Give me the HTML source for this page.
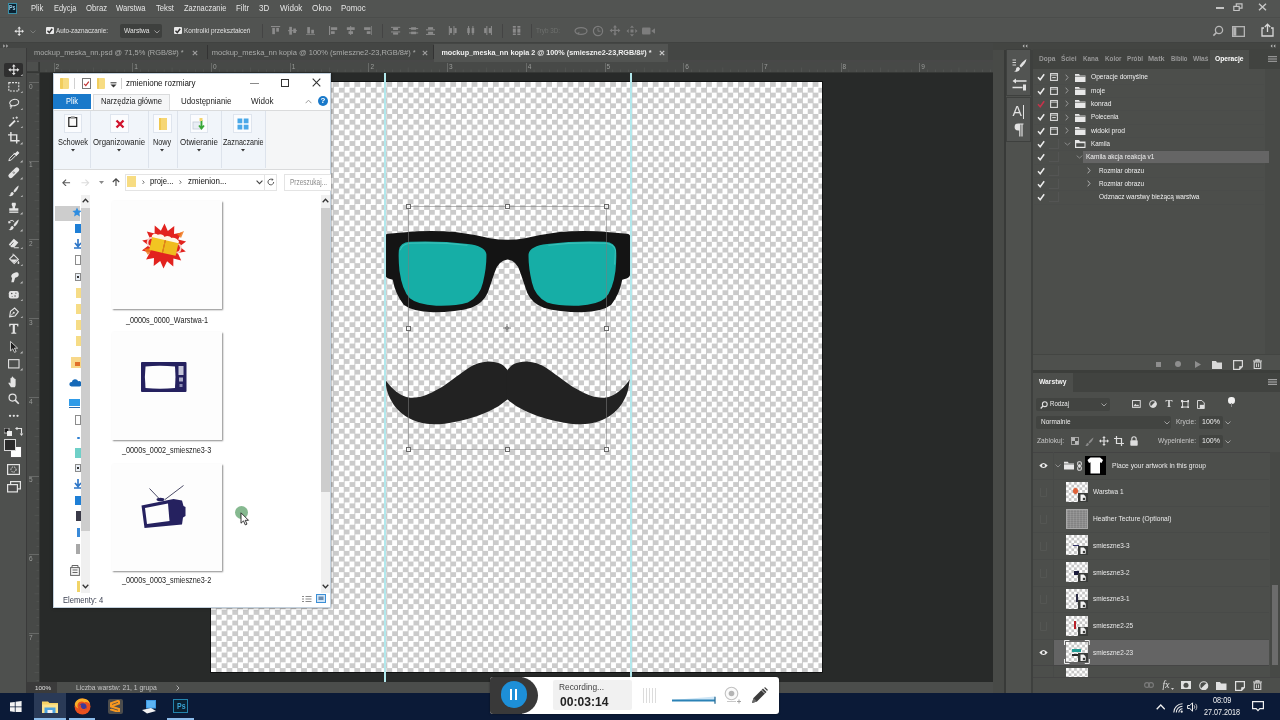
<!DOCTYPE html>
<html lang="pl"><head><meta charset="utf-8"><title>Photoshop</title>
<style>
html,body{margin:0;padding:0;}
body{width:1280px;height:720px;overflow:hidden;position:relative;background:#4d4d4d;font-family:"Liberation Sans",sans-serif;}
#r{position:absolute;left:0;top:0;width:1280px;height:720px;overflow:hidden;will-change:transform;}
#r div,#r span,#r svg{position:absolute;display:block;}
#r span{white-space:nowrap;}
</style></head><body><div id="r">
<div style="left:0px;top:0px;width:1280px;height:19px;background:#525452;"></div>
<div style="left:0px;top:19px;width:1280px;height:24px;background:#515351;"></div>
<div style="left:0px;top:43px;width:1280px;height:18.5px;background:#444644;"></div>
<div style="left:39px;top:72px;width:954px;height:610px;background:#282a29;"></div>
<div style="left:27px;top:60px;width:966px;height:12px;background:#484848;"></div>
<div style="left:27px;top:72px;width:12px;height:610px;background:#484848;"></div>
<div style="left:0px;top:48px;width:27px;height:645px;background:#4e504e;"></div>
<div style="left:27px;top:682px;width:966px;height:11px;background:#4a4a4a;"></div>
<div style="left:211px;top:82px;width:610.6px;height:590px;background:#fff;box-shadow:0 0 0 0.800px #0c0c0c;background-image:conic-gradient(#cbcbcb 25%,#fff 0 50%,#cbcbcb 0 75%,#fff 0);background-size:10.6666px 10.6666px;background-position:0 0;"></div>
<svg style="left:375px;top:195px;" width="270" height="140.06" viewBox="0 0 1280 664"><path d="M47 200 Q48 186 62 184 L200 172 Q300 168 380 176 Q470 188 545 205 Q628 220 711 205 Q786 188 876 176 Q956 168 1056 172 L1194 184 Q1210 186 1211 200 L1211 372 Q1209 390 1192 396 L1172 402 Q1160 470 1120 520 Q1080 552 980 556 Q870 556 800 535 Q745 515 722 465 Q700 400 688 365 Q672 312 628 306 Q584 312 568 365 Q556 400 534 465 Q511 515 456 535 Q386 556 276 556 Q176 552 136 520 Q96 470 84 402 L64 396 Q49 390 47 372 Z" fill="#141414"/><path d="M113 262 Q118 226 165 222 Q300 216 440 232 Q520 240 528 280 Q530 340 512 415 Q498 480 440 510 Q380 528 290 525 Q200 520 165 490 Q128 450 116 360 Q110 300 113 262 Z" fill="#16aea6"/><path d="M1143 262 Q1138 226 1091 222 Q956 216 816 232 Q736 240 728 280 Q726 340 744 415 Q758 480 816 510 Q876 528 966 525 Q1056 520 1091 490 Q1128 450 1140 360 Q1146 300 1143 262 Z" fill="#16aea6"/><path d="M120 262 Q126 232 168 229 Q300 222 438 238" fill="none" stroke="#4cc7c0" stroke-width="5" opacity="0.700"/><path d="M822 238 Q960 222 1092 229 Q1134 232 1140 262 L1136 330" fill="none" stroke="#4cc7c0" stroke-width="5" opacity="0.700"/></svg>
<svg style="left:375px;top:330px;" width="270" height="140.06" viewBox="0 0 1280 664"><path d="M628 190C624.2 186.0 614.7 172.2 605.0 166.0C595.3 159.8 582.5 155.7 570.0 153.0C557.5 150.3 543.3 149.2 530.0 150.0C516.7 150.8 505.0 152.7 490.0 158.0C475.0 163.3 457.5 171.3 440.0 182.0C422.5 192.7 403.3 208.7 385.0 222.0C366.7 235.3 349.2 249.7 330.0 262.0C310.8 274.3 289.2 287.0 270.0 296.0C250.8 305.0 233.3 312.0 215.0 316.0C196.7 320.0 176.7 322.3 160.0 320.0C143.3 317.7 128.7 310.0 115.0 302.0C101.3 294.0 89.2 283.2 78.0 272.0C66.8 260.8 53.0 241.2 48.0 235.0C49.7 244.2 52.7 272.5 58.0 290.0C63.3 307.5 71.0 324.7 80.0 340.0C89.0 355.3 99.5 369.5 112.0 382.0C124.5 394.5 139.5 406.0 155.0 415.0C170.5 424.0 187.5 430.8 205.0 436.0C222.5 441.2 239.2 444.7 260.0 446.0C280.8 447.3 306.7 446.3 330.0 444.0C353.3 441.7 376.7 437.3 400.0 432.0C423.3 426.7 446.7 419.8 470.0 412.0C493.3 404.2 520.0 394.0 540.0 385.0C560.0 376.0 575.3 367.2 590.0 358.0C604.7 348.8 621.7 334.7 628.0 330.0Z" fill="#222222"/><g transform="translate(1256 0) scale(-1 1)"><path d="M628 190C624.2 186.0 614.7 172.2 605.0 166.0C595.3 159.8 582.5 155.7 570.0 153.0C557.5 150.3 543.3 149.2 530.0 150.0C516.7 150.8 505.0 152.7 490.0 158.0C475.0 163.3 457.5 171.3 440.0 182.0C422.5 192.7 403.3 208.7 385.0 222.0C366.7 235.3 349.2 249.7 330.0 262.0C310.8 274.3 289.2 287.0 270.0 296.0C250.8 305.0 233.3 312.0 215.0 316.0C196.7 320.0 176.7 322.3 160.0 320.0C143.3 317.7 128.7 310.0 115.0 302.0C101.3 294.0 89.2 283.2 78.0 272.0C66.8 260.8 53.0 241.2 48.0 235.0C49.7 244.2 52.7 272.5 58.0 290.0C63.3 307.5 71.0 324.7 80.0 340.0C89.0 355.3 99.5 369.5 112.0 382.0C124.5 394.5 139.5 406.0 155.0 415.0C170.5 424.0 187.5 430.8 205.0 436.0C222.5 441.2 239.2 444.7 260.0 446.0C280.8 447.3 306.7 446.3 330.0 444.0C353.3 441.7 376.7 437.3 400.0 432.0C423.3 426.7 446.7 419.8 470.0 412.0C493.3 404.2 520.0 394.0 540.0 385.0C560.0 376.0 575.3 367.2 590.0 358.0C604.7 348.8 621.7 334.7 628.0 330.0Z" fill="#222222"/></g><rect x="622" y="192" width="12" height="136" fill="#222222"/></svg>
<div style="left:408px;top:206px;width:198.5px;height:0.8px;background:rgba(125,125,125,0.550);"></div>
<div style="left:408px;top:449.3px;width:198.5px;height:0.8px;background:rgba(125,125,125,0.550);"></div>
<div style="left:408px;top:206px;width:0.8px;height:244px;background:rgba(125,125,125,0.550);"></div>
<div style="left:606px;top:206px;width:0.8px;height:244px;background:rgba(125,125,125,0.550);"></div>
<div style="left:406.0px;top:204.0px;width:4.6px;height:4.6px;background:rgba(255,255,255,0.700);border:0.900px solid #6a6a6a;box-sizing:border-box;"></div>
<div style="left:406.0px;top:326.0px;width:4.6px;height:4.6px;background:rgba(255,255,255,0.700);border:0.900px solid #6a6a6a;box-sizing:border-box;"></div>
<div style="left:406.0px;top:447.3px;width:4.6px;height:4.6px;background:rgba(255,255,255,0.700);border:0.900px solid #6a6a6a;box-sizing:border-box;"></div>
<div style="left:505.0px;top:204.0px;width:4.6px;height:4.6px;background:rgba(255,255,255,0.700);border:0.900px solid #6a6a6a;box-sizing:border-box;"></div>
<svg style="left:503.3px;top:324.3px;" width="8" height="8" viewBox="0 0 8 8"><path d="M4 0v8M0 4h8" stroke="#777" stroke-width="0.900"/><circle cx="4" cy="4" r="1.500" fill="none" stroke="#777" stroke-width="0.700"/></svg>
<div style="left:505.0px;top:447.3px;width:4.6px;height:4.6px;background:rgba(255,255,255,0.700);border:0.900px solid #6a6a6a;box-sizing:border-box;"></div>
<div style="left:604.0px;top:204.0px;width:4.6px;height:4.6px;background:rgba(255,255,255,0.700);border:0.900px solid #6a6a6a;box-sizing:border-box;"></div>
<div style="left:604.0px;top:326.0px;width:4.6px;height:4.6px;background:rgba(255,255,255,0.700);border:0.900px solid #6a6a6a;box-sizing:border-box;"></div>
<div style="left:604.0px;top:447.3px;width:4.6px;height:4.6px;background:rgba(255,255,255,0.700);border:0.900px solid #6a6a6a;box-sizing:border-box;"></div>
<div style="left:384.3px;top:72px;width:1.5px;height:610px;background:#b2e8ec;"></div>
<div style="left:630px;top:72px;width:1.5px;height:610px;background:#b2e8ec;"></div>
<div style="left:7.6px;top:3px;width:9px;height:11px;background:#0a2232;border:1px solid #3a8fa8;box-sizing:border-box;"></div>
<span style="left:9px;top:4.31px;font-size:6.6px;line-height:8.58px;color:#9fd0e6;font-weight:bold;transform:scaleX(0.793);transform-origin:0 50%;">Ps</span>
<span style="left:30.8px;top:3.48px;font-size:8.8px;line-height:11.44px;color:#e6e6e6;transform:scaleX(0.86);transform-origin:0 50%;">Plik</span>
<span style="left:53.6px;top:3.48px;font-size:8.8px;line-height:11.44px;color:#e6e6e6;transform:scaleX(0.848);transform-origin:0 50%;">Edycja</span>
<span style="left:85.5px;top:3.48px;font-size:8.8px;line-height:11.44px;color:#e6e6e6;transform:scaleX(0.88);transform-origin:0 50%;">Obraz</span>
<span style="left:116.4px;top:3.48px;font-size:8.8px;line-height:11.44px;color:#e6e6e6;transform:scaleX(0.873);transform-origin:0 50%;">Warstwa</span>
<span style="left:155.5px;top:3.48px;font-size:8.8px;line-height:11.44px;color:#e6e6e6;transform:scaleX(0.872);transform-origin:0 50%;">Tekst</span>
<span style="left:183.5px;top:3.48px;font-size:8.8px;line-height:11.44px;color:#e6e6e6;transform:scaleX(0.848);transform-origin:0 50%;">Zaznaczanie</span>
<span style="left:236px;top:3.48px;font-size:8.8px;line-height:11.44px;color:#e6e6e6;transform:scaleX(0.887);transform-origin:0 50%;">Filtr</span>
<span style="left:259.4px;top:3.48px;font-size:8.8px;line-height:11.44px;color:#e6e6e6;transform:scaleX(0.907);transform-origin:0 50%;">3D</span>
<span style="left:279.6px;top:3.48px;font-size:8.8px;line-height:11.44px;color:#e6e6e6;transform:scaleX(0.916);transform-origin:0 50%;">Widok</span>
<span style="left:312px;top:3.48px;font-size:8.8px;line-height:11.44px;color:#e6e6e6;transform:scaleX(0.932);transform-origin:0 50%;">Okno</span>
<span style="left:340.6px;top:3.48px;font-size:8.8px;line-height:11.44px;color:#e6e6e6;transform:scaleX(0.898);transform-origin:0 50%;">Pomoc</span>
<div style="left:1215.5px;top:7.2px;width:8.2px;height:1.5px;background:#c4c4c4;"></div>
<svg style="left:1232.5px;top:2.5px;" width="10" height="8.5" viewBox="0 0 10 8.5"><path d="M0.800 3.300h5.400v4.400h-5.400z M3.300 3.300v-2.500h5.700v4.400h-2.800" fill="none" stroke="#c4c4c4" stroke-width="1.2"/></svg>
<svg style="left:1257.5px;top:2.5px;" width="9" height="8" viewBox="0 0 9 8"><path d="M1 0.800l7 6.400M8 0.800l-7 6.400" stroke="#c8c8c8" stroke-width="1.400"/></svg>
<div style="left:0px;top:16.8px;width:1280px;height:1.2px;background:#4b4d4b;"></div>
<svg style="left:14.2px;top:26.2px;" width="10.4" height="10.4" viewBox="0 0 13 13"><path d="M6.5 0.5l2.2 2.6h-1.5v2.7h2.7v-1.5l2.6 2.2-2.6 2.2v-1.5h-2.7v2.7h1.5l-2.2 2.6-2.2-2.6h1.5v-2.7h-2.7v1.5l-2.6-2.2 2.6-2.2v1.5h2.7v-2.7h-1.5z" fill="#e6e6e6"/></svg>
<svg style="left:30px;top:30px;" width="6" height="4" viewBox="0 0 6 4"><path d="M0.5 0.5l2.5 2.5 2.5-2.5" fill="none" stroke="#7a7c7a" stroke-width="1"/></svg>
<div style="left:46px;top:26.5px;width:7.5px;height:7.5px;background:#e9e9e9;border-radius:1px;"></div>
<svg style="left:46px;top:26.5px;" width="7.5" height="7.5" viewBox="0 0 7.5 7.5"><path d="M1.5 3.8l1.8 1.9 2.9-4" fill="none" stroke="#333" stroke-width="1.5"/></svg>
<span style="left:56px;top:25.86px;font-size:7.6px;line-height:9.88px;color:#e0e0e0;transform:scaleX(0.832);transform-origin:0 50%;">Auto-zaznaczanie:</span>
<div style="left:119.5px;top:24px;width:42px;height:13.5px;background:#3e403e;border-radius:2px;"></div>
<span style="left:124px;top:26.06px;font-size:7.6px;line-height:9.88px;color:#e4e4e4;transform:scaleX(0.871);transform-origin:0 50%;">Warstwa</span>
<svg style="left:153.5px;top:29.5px;" width="6" height="4" viewBox="0 0 6 4"><path d="M0.5 0.5l2.5 2.5 2.5-2.5" fill="none" stroke="#9a9a9a" stroke-width="1"/></svg>
<div style="left:174px;top:26.5px;width:7.5px;height:7.5px;background:#e9e9e9;border-radius:1px;"></div>
<svg style="left:174px;top:26.5px;" width="7.5" height="7.5" viewBox="0 0 7.5 7.5"><path d="M1.5 3.8l1.8 1.9 2.9-4" fill="none" stroke="#333" stroke-width="1.5"/></svg>
<span style="left:184px;top:25.86px;font-size:7.6px;line-height:9.88px;color:#e0e0e0;transform:scaleX(0.851);transform-origin:0 50%;">Kontrolki przekształceń</span>
<div style="left:261.5px;top:24px;width:1px;height:14px;background:#444;"></div>
<svg style="left:271.4px;top:26.2px;" width="9.2" height="9.2" viewBox="0 0 11 11"><rect x="0" y="0" width="11" height="1.3" fill="#8b8b8b"/><rect x="1.5" y="2.3" width="3.2" height="7.5" fill="#8b8b8b"/><rect x="6.3" y="2.3" width="3.2" height="4.5" fill="#8b8b8b"/></svg>
<svg style="left:288.2px;top:26.2px;" width="9.2" height="9.2" viewBox="0 0 11 11"><rect x="0" y="5" width="11" height="1.2" fill="#8b8b8b"/><rect x="1.5" y="1" width="3.2" height="9.4" fill="#8b8b8b"/><rect x="6.3" y="3" width="3.2" height="5.4" fill="#8b8b8b"/></svg>
<svg style="left:305.9px;top:26.2px;" width="9.2" height="9.2" viewBox="0 0 11 11"><rect x="0" y="10" width="11" height="1.3" fill="#8b8b8b"/><rect x="1.5" y="1.3" width="3.2" height="7.7" fill="#8b8b8b"/><rect x="6.3" y="4.5" width="3.2" height="4.5" fill="#8b8b8b"/></svg>
<svg style="left:328.79999999999995px;top:26.2px;" width="9.2" height="9.2" viewBox="0 0 11 11"><rect x="0" y="0" width="1.3" height="11" fill="#8b8b8b"/><rect x="2.3" y="1.5" width="7.5" height="3.2" fill="#8b8b8b"/><rect x="2.3" y="6.3" width="4.5" height="3.2" fill="#8b8b8b"/></svg>
<svg style="left:346.0px;top:26.2px;" width="9.2" height="9.2" viewBox="0 0 11 11"><rect x="5" y="0" width="1.2" height="11" fill="#8b8b8b"/><rect x="1" y="1.5" width="9.4" height="3.2" fill="#8b8b8b"/><rect x="3" y="6.3" width="5.4" height="3.2" fill="#8b8b8b"/></svg>
<svg style="left:363.2px;top:26.2px;" width="9.2" height="9.2" viewBox="0 0 11 11"><rect x="10" y="0" width="1.3" height="11" fill="#8b8b8b"/><rect x="1.3" y="1.5" width="7.7" height="3.2" fill="#8b8b8b"/><rect x="4.5" y="6.3" width="4.5" height="3.2" fill="#8b8b8b"/></svg>
<svg style="left:391.4px;top:26.2px;" width="9.2" height="9.2" viewBox="0 0 11 11"><rect x="0" y="1" width="11" height="1.2" fill="#8b8b8b"/><rect x="0" y="6.5" width="11" height="1.2" fill="#8b8b8b"/><rect x="2.5" y="2.2" width="6" height="2.6" fill="#8b8b8b"/><rect x="2.5" y="7.7" width="6" height="2.6" fill="#8b8b8b"/></svg>
<svg style="left:409.4px;top:26.2px;" width="9.2" height="9.2" viewBox="0 0 11 11"><rect x="0" y="2.5" width="11" height="1.2" fill="#8b8b8b"/><rect x="0" y="7.7" width="11" height="1.2" fill="#8b8b8b"/><rect x="2.5" y="1.5" width="6" height="3" fill="#8b8b8b"/><rect x="2.5" y="6.8" width="6" height="3" fill="#8b8b8b"/></svg>
<svg style="left:425.9px;top:26.2px;" width="9.2" height="9.2" viewBox="0 0 11 11"><rect x="0" y="4" width="11" height="1.2" fill="#8b8b8b"/><rect x="0" y="9.5" width="11" height="1.2" fill="#8b8b8b"/><rect x="2.5" y="1.4" width="6" height="2.6" fill="#8b8b8b"/><rect x="2.5" y="6.9" width="6" height="2.6" fill="#8b8b8b"/></svg>
<svg style="left:448.4px;top:26.2px;" width="9.2" height="9.2" viewBox="0 0 11 11"><rect x="1" y="0" width="1.2" height="11" fill="#8b8b8b"/><rect x="6.5" y="0" width="1.2" height="11" fill="#8b8b8b"/><rect x="2.2" y="2.5" width="2.6" height="6" fill="#8b8b8b"/><rect x="7.7" y="2.5" width="2.6" height="6" fill="#8b8b8b"/></svg>
<svg style="left:466.4px;top:26.2px;" width="9.2" height="9.2" viewBox="0 0 11 11"><rect x="2.5" y="0" width="1.2" height="11" fill="#8b8b8b"/><rect x="7.7" y="0" width="1.2" height="11" fill="#8b8b8b"/><rect x="1.5" y="2.5" width="3" height="6" fill="#8b8b8b"/><rect x="6.8" y="2.5" width="3" height="6" fill="#8b8b8b"/></svg>
<svg style="left:483.4px;top:26.2px;" width="9.2" height="9.2" viewBox="0 0 11 11"><rect x="4" y="0" width="1.2" height="11" fill="#8b8b8b"/><rect x="9.5" y="0" width="1.2" height="11" fill="#8b8b8b"/><rect x="1.4" y="2.5" width="2.6" height="6" fill="#8b8b8b"/><rect x="6.9" y="2.5" width="2.6" height="6" fill="#8b8b8b"/></svg>
<svg style="left:512.4px;top:26.2px;" width="9.2" height="9.2" viewBox="0 0 11 11"><rect x="1" y="0" width="3.6" height="11" fill="#8b8b8b"/><rect x="6.4" y="0" width="3.6" height="11" fill="#8b8b8b"/><rect x="0" y="2" width="11" height="1" fill="#4f4f4f"/><rect x="0" y="8" width="11" height="1" fill="#4f4f4f"/></svg>
<div style="left:382px;top:24px;width:1px;height:14px;background:#444;"></div>
<div style="left:502px;top:24px;width:1px;height:14px;background:#444;"></div>
<div style="left:531px;top:24px;width:1px;height:14px;background:#444;"></div>
<span style="left:536px;top:26.89px;font-size:6.32px;line-height:8.22px;color:#6e706e;">Tryb 3D:</span>
<svg style="left:574px;top:25px;" width="14" height="12" viewBox="0 0 14 12"><ellipse cx="7" cy="6" rx="6" ry="3.4" fill="none" stroke="#7d7d7d" stroke-width="1.2"/><path d="M3 8l2.5-1-0.5 2.6z" fill="#7d7d7d"/></svg>
<svg style="left:592px;top:25px;" width="12" height="12" viewBox="0 0 12 12"><circle cx="6" cy="6" r="4.6" fill="none" stroke="#7d7d7d" stroke-width="1.2"/><path d="M6 3v3.2h2.5" fill="none" stroke="#7d7d7d" stroke-width="1"/></svg>
<svg style="left:609px;top:25px;" width="12" height="12" viewBox="0 0 12 12"><path d="M6 0l2 2.4h-1.3v2.3h2.3v-1.3l2.4 2-2.4 2v-1.3h-2.3v2.3h1.3l-2 2.4-2-2.4h1.3v-2.3h-2.3v1.3l-2.4-2 2.4-2v1.3h2.3v-2.3h-1.3z" fill="#7d7d7d"/></svg>
<svg style="left:626px;top:25px;" width="12" height="12" viewBox="0 0 12 12"><path d="M6 0.5l2 2.2h-4zM6 11.500l2-2.2h-4zM0.500 6l2.200-2v4zM11.500 6l-2.200-2v4z" fill="#7d7d7d"/><rect x="4.500" y="4.500" width="3" height="3" fill="#7d7d7d"/></svg>
<svg style="left:642px;top:26px;" width="14" height="10" viewBox="0 0 14 10"><rect x="0" y="1.5" width="8.500" height="7" rx="1" fill="#7d7d7d"/><path d="M9.200 5l3.800-2.800v5.600z" fill="#7d7d7d"/></svg>
<svg style="left:1212px;top:25px;" width="12" height="12" viewBox="0 0 12 12"><circle cx="7" cy="5" r="3.600" fill="none" stroke="#b8b8b8" stroke-width="1.300"/><path d="M4.400 7.600l-3 3" stroke="#b8b8b8" stroke-width="1.500"/></svg>
<svg style="left:1232px;top:25.5px;" width="13" height="11" viewBox="0 0 13 11"><rect x="0.650" y="0.650" width="11.700" height="9.700" fill="none" stroke="#b4b4b4" stroke-width="1.300"/><rect x="1.300" y="1.300" width="3" height="8.400" fill="#b4b4b4"/></svg>
<svg style="left:1261px;top:23px;" width="13" height="14" viewBox="0 0 13 14"><path d="M3 5h-2v8h11v-8h-2" fill="none" stroke="#d8d8d8" stroke-width="1.300"/><path d="M6.500 9v-7.500M3.800 4l2.700-2.800 2.700 2.800" fill="none" stroke="#d8d8d8" stroke-width="1.300"/></svg>
<div style="left:0px;top:42.3px;width:1280px;height:1px;background:#404240;"></div>
<div style="left:434px;top:44px;width:234px;height:17.5px;background:#525452;"></div>
<div style="left:207px;top:45px;width:1px;height:14px;background:#333;"></div>
<div style="left:433px;top:45px;width:1px;height:14px;background:#333;"></div>
<span style="left:34px;top:48.16px;font-size:7.45px;line-height:9.69px;color:#a9aba9;">mockup_meska_nn.psd @ 71,5% (RGB/8#) *</span>
<span style="left:211.7px;top:48.11px;font-size:7.52px;line-height:9.78px;color:#a9aba9;">mockup_meska_nn kopia @ 100% (smieszne2-23,RGB/8#) *</span>
<span style="left:441.4px;top:48.3px;font-size:7.22px;line-height:9.39px;color:#f0f0f0;font-weight:bold;">mockup_meska_nn kopia 2 @ 100% (smieszne2-23,RGB/8#) *</span>
<svg style="left:191.5px;top:50px;" width="6" height="6" viewBox="0 0 6 6"><path d="M0.800 0.800l4.400 4.400M5.200 0.800l-4.400 4.400" stroke="#9c9c9c" stroke-width="1.200"/></svg>
<svg style="left:421.5px;top:50px;" width="6" height="6" viewBox="0 0 6 6"><path d="M0.800 0.800l4.400 4.400M5.200 0.800l-4.400 4.400" stroke="#9c9c9c" stroke-width="1.200"/></svg>
<svg style="left:658.5px;top:50px;" width="6" height="6" viewBox="0 0 6 6"><path d="M0.800 0.800l4.400 4.400M5.200 0.800l-4.400 4.400" stroke="#c8c8c8" stroke-width="1.200"/></svg>
<svg style="left:3px;top:43.8px;" width="6" height="4" viewBox="0 0 6 4"><path d="M0.300 0.300l1.700 1.700-1.700 1.700zM3.300 0.300l1.700 1.700-1.700 1.700z" fill="#bdbdbd"/></svg>
<div style="left:993px;top:43px;width:287px;height:650px;background:#484a47;"></div>
<div style="left:1004px;top:49px;width:1.6px;height:644px;background:#383a38;"></div>
<div style="left:1031px;top:49px;width:2px;height:644px;background:#3e403e;"></div>
<div style="left:993px;top:43px;width:287px;height:6.5px;background:#434542;"></div>
<svg style="left:1021.5px;top:43.8px;" width="6" height="4" viewBox="0 0 6 4"><path d="M2.300 0.300l-1.700 1.700 1.700 1.700zM5.300 0.300l-1.700 1.700 1.700 1.700z" fill="#bdbdbd"/></svg>
<svg style="left:1269.5px;top:43.8px;" width="6" height="4" viewBox="0 0 6 4"><path d="M2.300 0.300l-1.700 1.700 1.700 1.700zM5.300 0.300l-1.700 1.700 1.700 1.700z" fill="#bdbdbd"/></svg>
<div style="left:1005.6px;top:49px;width:25.4px;height:644px;background:#4f514e;"></div>
<div style="left:1005.6px;top:49px;width:25.4px;height:46.5px;background:#525452;border:1px solid #3e403e;box-sizing:border-box;"></div>
<div style="left:1005.6px;top:96.5px;width:25.4px;height:45px;background:#525452;border:1px solid #3e403e;box-sizing:border-box;"></div>
<svg style="left:1011.5px;top:58px;" width="15" height="15" viewBox="0 0 15 15"><path d="M0.500 2h3.500M0.500 4.500h3.500M0.500 7h3.500" stroke="#e2e2e2" stroke-width="0.900"/><path d="M14.500 1c-3 1.500-5.500 4.500-7 7l1.500 1.500c2.500-2 5-5 5.500-8.500z" fill="#e2e2e2"/><path d="M6.500 9c-2 0-2.500 1.500-2.500 2.500s-1 1.500-2 1.800c2 1 5.500 0.200 6-2.800z" fill="#e2e2e2"/></svg>
<svg style="left:1011.5px;top:77.5px;" width="15" height="14" viewBox="0 0 15 14"><path d="M3 3h11.500M0.500 9.500h10" stroke="#e2e2e2" stroke-width="1.300"/><path d="M0.500 3l3.500-2.500v5zM11 6.500h3v6h-3z" fill="#e2e2e2"/></svg>
<span style="left:1012.5px;top:102.4px;font-size:14px;line-height:18.2px;color:#e2e2e2;">A</span>
<div style="left:1023.2px;top:105px;width:1.1px;height:13.5px;background:#e2e2e2;"></div>
<svg style="left:1014px;top:122.5px;" width="10" height="14" viewBox="0 0 10 14"><path d="M9.500 0.600h-5.500a3.400 3.400 0 0 0 0 6.800h1.200v6h1.200v-11.800h1v11.800h1.200v-11.800h0.900z" fill="#e2e2e2"/></svg>
<div style="left:1033px;top:49px;width:247px;height:322px;background:#4c4e4b;"></div>
<div style="left:1033px;top:49px;width:247px;height:19.5px;background:#414340;"></div>
<div style="left:1209.5px;top:49.5px;width:39px;height:19px;background:#4c4e4b;"></div>
<span style="left:1038.6px;top:53.86px;font-size:7.6px;line-height:9.88px;color:#989898;font-weight:bold;transform:scaleX(0.863);transform-origin:0 50%;">Dopa</span>
<span style="left:1061px;top:53.86px;font-size:7.6px;line-height:9.88px;color:#989898;font-weight:bold;transform:scaleX(0.873);transform-origin:0 50%;">Ściei</span>
<span style="left:1083px;top:53.86px;font-size:7.6px;line-height:9.88px;color:#989898;font-weight:bold;transform:scaleX(0.834);transform-origin:0 50%;">Kana</span>
<span style="left:1104.5px;top:53.86px;font-size:7.6px;line-height:9.88px;color:#989898;font-weight:bold;transform:scaleX(0.832);transform-origin:0 50%;">Kolor</span>
<span style="left:1126.5px;top:53.86px;font-size:7.6px;line-height:9.88px;color:#989898;font-weight:bold;transform:scaleX(0.824);transform-origin:0 50%;">Próbl</span>
<span style="left:1148.3px;top:53.86px;font-size:7.6px;line-height:9.88px;color:#989898;font-weight:bold;transform:scaleX(0.964);transform-origin:0 50%;">Matk</span>
<span style="left:1171px;top:53.86px;font-size:7.6px;line-height:9.88px;color:#989898;font-weight:bold;transform:scaleX(0.782);transform-origin:0 50%;">Biblio</span>
<span style="left:1193px;top:53.86px;font-size:7.6px;line-height:9.88px;color:#989898;font-weight:bold;transform:scaleX(0.874);transform-origin:0 50%;">Właś</span>
<span style="left:1214.5px;top:53.86px;font-size:7.6px;line-height:9.88px;color:#ffffff;font-weight:bold;transform:scaleX(0.876);transform-origin:0 50%;">Operacje</span>
<svg style="left:1267.5px;top:56px;" width="9" height="6" viewBox="0 0 9 6"><path d="M0 0.700h9M0 3h9M0 5.300h9" stroke="#a8a8a8" stroke-width="1"/></svg>
<div style="left:1265px;top:69px;width:15px;height:286px;background:#484a47;"></div>
<div style="left:1034px;top:83.8px;width:230px;height:0.6px;background:#4a4c4a;"></div>
<svg style="left:1036.5px;top:73.3px;" width="8" height="8" viewBox="0 0 8 8"><path d="M1 4.300l2.200 2.400 4-5.500" fill="none" stroke="#ececec" stroke-width="1.500"/></svg>
<svg style="left:1050px;top:73.3px;" width="8" height="8" viewBox="0 0 8 8"><rect x="0.600" y="0.600" width="6.800" height="6.800" fill="none" stroke="#dcdcdc" stroke-width="1.100"/><path d="M0.600 2.200h6.800" stroke="#dcdcdc" stroke-width="0.800"/><path d="M2.200 4.600h3.600" stroke="#dcdcdc" stroke-width="1"/></svg>
<svg style="left:1065px;top:73.8px;" width="4" height="7" viewBox="0 0 4 7"><path d="M0.700 0.700l2.300 2.800-2.300 2.800" fill="none" stroke="#9a9a9a" stroke-width="1"/></svg>
<svg style="left:1075px;top:72.8px;" width="10.5" height="9" viewBox="0 0 10.5 9"><path d="M0 1h4l1 1.500h5.500v6.500h-10.500z" fill="#e8e8e8"/><path d="M0 3.300h10.500" stroke="#4c4e4b" stroke-width="0.700"/></svg>
<span style="left:1090.5px;top:72.36px;font-size:7.6px;line-height:9.88px;color:#f0f0f0;transform:scaleX(0.871);transform-origin:0 50%;">Operacje domyślne</span>
<div style="left:1034px;top:97.1px;width:230px;height:0.6px;background:#4a4c4a;"></div>
<svg style="left:1036.5px;top:86.62px;" width="8" height="8" viewBox="0 0 8 8"><path d="M1 4.300l2.200 2.400 4-5.500" fill="none" stroke="#ececec" stroke-width="1.500"/></svg>
<svg style="left:1050px;top:86.62px;" width="8" height="8" viewBox="0 0 8 8"><rect x="0.600" y="0.600" width="6.800" height="6.800" fill="none" stroke="#dcdcdc" stroke-width="1.100"/><path d="M0.600 2.200h6.800" stroke="#dcdcdc" stroke-width="0.800"/></svg>
<svg style="left:1065px;top:87.12px;" width="4" height="7" viewBox="0 0 4 7"><path d="M0.700 0.700l2.300 2.800-2.300 2.800" fill="none" stroke="#9a9a9a" stroke-width="1"/></svg>
<svg style="left:1075px;top:86.12px;" width="10.5" height="9" viewBox="0 0 10.5 9"><path d="M0 1h4l1 1.500h5.500v6.500h-10.500z" fill="#e8e8e8"/><path d="M0 3.300h10.500" stroke="#4c4e4b" stroke-width="0.700"/></svg>
<span style="left:1090.5px;top:85.68px;font-size:7.6px;line-height:9.88px;color:#f0f0f0;transform:scaleX(0.85);transform-origin:0 50%;">moje</span>
<div style="left:1034px;top:110.4px;width:230px;height:0.6px;background:#4a4c4a;"></div>
<svg style="left:1036.5px;top:99.94px;" width="8" height="8" viewBox="0 0 8 8"><path d="M1 4.300l2.200 2.400 4-5.500" fill="none" stroke="#c8324a" stroke-width="1.500"/></svg>
<svg style="left:1050px;top:99.94px;" width="8" height="8" viewBox="0 0 8 8"><rect x="0.600" y="0.600" width="6.800" height="6.800" fill="none" stroke="#dcdcdc" stroke-width="1.100"/><path d="M0.600 2.200h6.800" stroke="#dcdcdc" stroke-width="0.800"/></svg>
<svg style="left:1065px;top:100.44px;" width="4" height="7" viewBox="0 0 4 7"><path d="M0.700 0.700l2.300 2.800-2.300 2.800" fill="none" stroke="#9a9a9a" stroke-width="1"/></svg>
<svg style="left:1075px;top:99.44px;" width="10.5" height="9" viewBox="0 0 10.5 9"><path d="M0 1h4l1 1.500h5.500v6.500h-10.500z" fill="#e8e8e8"/><path d="M0 3.300h10.500" stroke="#4c4e4b" stroke-width="0.700"/></svg>
<span style="left:1090.5px;top:99.0px;font-size:7.6px;line-height:9.88px;color:#f0f0f0;transform:scaleX(0.882);transform-origin:0 50%;">konrad</span>
<div style="left:1034px;top:123.8px;width:230px;height:0.6px;background:#4a4c4a;"></div>
<svg style="left:1036.5px;top:113.25999999999999px;" width="8" height="8" viewBox="0 0 8 8"><path d="M1 4.300l2.200 2.400 4-5.500" fill="none" stroke="#ececec" stroke-width="1.500"/></svg>
<svg style="left:1050px;top:113.25999999999999px;" width="8" height="8" viewBox="0 0 8 8"><rect x="0.600" y="0.600" width="6.800" height="6.800" fill="none" stroke="#dcdcdc" stroke-width="1.100"/><path d="M0.600 2.200h6.800" stroke="#dcdcdc" stroke-width="0.800"/><path d="M2.200 4.600h3.600" stroke="#dcdcdc" stroke-width="1"/></svg>
<svg style="left:1065px;top:113.75999999999999px;" width="4" height="7" viewBox="0 0 4 7"><path d="M0.700 0.700l2.300 2.800-2.300 2.800" fill="none" stroke="#9a9a9a" stroke-width="1"/></svg>
<svg style="left:1075px;top:112.75999999999999px;" width="10.5" height="9" viewBox="0 0 10.5 9"><path d="M0 1h4l1 1.500h5.500v6.500h-10.500z" fill="#e8e8e8"/><path d="M0 3.300h10.500" stroke="#4c4e4b" stroke-width="0.700"/></svg>
<span style="left:1090.5px;top:112.32px;font-size:7.6px;line-height:9.88px;color:#f0f0f0;transform:scaleX(0.824);transform-origin:0 50%;">Polecenia</span>
<div style="left:1034px;top:137.1px;width:230px;height:0.6px;background:#4a4c4a;"></div>
<svg style="left:1036.5px;top:126.57999999999998px;" width="8" height="8" viewBox="0 0 8 8"><path d="M1 4.300l2.200 2.400 4-5.500" fill="none" stroke="#ececec" stroke-width="1.500"/></svg>
<svg style="left:1050px;top:126.57999999999998px;" width="8" height="8" viewBox="0 0 8 8"><rect x="0.600" y="0.600" width="6.800" height="6.800" fill="none" stroke="#dcdcdc" stroke-width="1.100"/><path d="M0.600 2.200h6.800" stroke="#dcdcdc" stroke-width="0.800"/></svg>
<svg style="left:1065px;top:127.07999999999998px;" width="4" height="7" viewBox="0 0 4 7"><path d="M0.700 0.700l2.300 2.800-2.300 2.800" fill="none" stroke="#9a9a9a" stroke-width="1"/></svg>
<svg style="left:1075px;top:126.07999999999998px;" width="10.5" height="9" viewBox="0 0 10.5 9"><path d="M0 1h4l1 1.500h5.500v6.500h-10.500z" fill="#e8e8e8"/><path d="M0 3.300h10.500" stroke="#4c4e4b" stroke-width="0.700"/></svg>
<span style="left:1090.5px;top:125.64px;font-size:7.6px;line-height:9.88px;color:#f0f0f0;transform:scaleX(0.884);transform-origin:0 50%;">widoki prod</span>
<div style="left:1034px;top:150.4px;width:230px;height:0.6px;background:#4a4c4a;"></div>
<svg style="left:1036.5px;top:139.89999999999998px;" width="8" height="8" viewBox="0 0 8 8"><path d="M1 4.300l2.200 2.400 4-5.500" fill="none" stroke="#ececec" stroke-width="1.500"/></svg>
<div style="left:1049px;top:138.89999999999998px;width:10px;height:10px;background:transparent;border-right:1px solid #5a5a5a;border-bottom:1px solid #5a5a5a;box-sizing:border-box;opacity:0.600;"></div>
<svg style="left:1063.5px;top:141.89999999999998px;" width="7" height="4" viewBox="0 0 7 4"><path d="M0.700 0.700l2.800 2.300 2.800-2.300" fill="none" stroke="#8a8a8a" stroke-width="1"/></svg>
<svg style="left:1075px;top:139.39999999999998px;" width="10.5" height="9" viewBox="0 0 10.5 9"><path d="M0 1h4l1 1.500h5.500v6.500h-10.500z" fill="#e8e8e8"/><path d="M1.200 4.200h8.300v3.600h-8.300z" fill="#4c4e4b"/></svg>
<span style="left:1090.5px;top:138.96px;font-size:7.6px;line-height:9.88px;color:#f0f0f0;transform:scaleX(0.818);transform-origin:0 50%;">Kamila</span>
<div style="left:1083px;top:151.02px;width:186px;height:12.4px;background:#656565;"></div>
<div style="left:1034px;top:163.7px;width:230px;height:0.6px;background:#4a4c4a;"></div>
<svg style="left:1036.5px;top:153.22px;" width="8" height="8" viewBox="0 0 8 8"><path d="M1 4.300l2.200 2.400 4-5.500" fill="none" stroke="#ececec" stroke-width="1.500"/></svg>
<div style="left:1049px;top:152.22px;width:10px;height:10px;background:transparent;border-right:1px solid #5a5a5a;border-bottom:1px solid #5a5a5a;box-sizing:border-box;opacity:0.600;"></div>
<svg style="left:1075.5px;top:155.22px;" width="7" height="4" viewBox="0 0 7 4"><path d="M0.700 0.700l2.800 2.300 2.800-2.300" fill="none" stroke="#8a8a8a" stroke-width="1"/></svg>
<span style="left:1085.5px;top:152.28px;font-size:7.6px;line-height:9.88px;color:#f0f0f0;transform:scaleX(0.858);transform-origin:0 50%;">Kamila akcja reakcja v1</span>
<div style="left:1034px;top:177.0px;width:230px;height:0.6px;background:#4a4c4a;"></div>
<svg style="left:1036.5px;top:166.54000000000002px;" width="8" height="8" viewBox="0 0 8 8"><path d="M1 4.300l2.200 2.400 4-5.500" fill="none" stroke="#ececec" stroke-width="1.500"/></svg>
<div style="left:1049px;top:165.54000000000002px;width:10px;height:10px;background:transparent;border-right:1px solid #5a5a5a;border-bottom:1px solid #5a5a5a;box-sizing:border-box;opacity:0.600;"></div>
<svg style="left:1086.5px;top:167.04000000000002px;" width="4" height="7" viewBox="0 0 4 7"><path d="M0.700 0.700l2.300 2.800-2.300 2.800" fill="none" stroke="#b0b0b0" stroke-width="1"/></svg>
<span style="left:1098.5px;top:165.6px;font-size:7.6px;line-height:9.88px;color:#f0f0f0;transform:scaleX(0.839);transform-origin:0 50%;">Rozmiar obrazu</span>
<div style="left:1034px;top:190.4px;width:230px;height:0.6px;background:#4a4c4a;"></div>
<svg style="left:1036.5px;top:179.86px;" width="8" height="8" viewBox="0 0 8 8"><path d="M1 4.300l2.200 2.400 4-5.500" fill="none" stroke="#ececec" stroke-width="1.500"/></svg>
<div style="left:1049px;top:178.86px;width:10px;height:10px;background:transparent;border-right:1px solid #5a5a5a;border-bottom:1px solid #5a5a5a;box-sizing:border-box;opacity:0.600;"></div>
<svg style="left:1086.5px;top:180.36px;" width="4" height="7" viewBox="0 0 4 7"><path d="M0.700 0.700l2.300 2.800-2.300 2.800" fill="none" stroke="#b0b0b0" stroke-width="1"/></svg>
<span style="left:1098.5px;top:178.92px;font-size:7.6px;line-height:9.88px;color:#f0f0f0;transform:scaleX(0.839);transform-origin:0 50%;">Rozmiar obrazu</span>
<div style="left:1034px;top:203.7px;width:230px;height:0.6px;background:#4a4c4a;"></div>
<svg style="left:1036.5px;top:193.18px;" width="8" height="8" viewBox="0 0 8 8"><path d="M1 4.300l2.200 2.400 4-5.500" fill="none" stroke="#ececec" stroke-width="1.500"/></svg>
<div style="left:1049px;top:192.18px;width:10px;height:10px;background:transparent;border-right:1px solid #5a5a5a;border-bottom:1px solid #5a5a5a;box-sizing:border-box;opacity:0.600;"></div>
<span style="left:1098.5px;top:192.24px;font-size:7.6px;line-height:9.88px;color:#f0f0f0;transform:scaleX(0.853);transform-origin:0 50%;">Odznacz warstwy bieżącą warstwa</span>
<div style="left:1033px;top:354px;width:247px;height:16.5px;background:#4e504d;border-top:1px solid #434542;box-sizing:border-box;"></div>
<div style="left:1033px;top:370px;width:247px;height:2.5px;background:#3c3e3b;"></div>
<div style="left:1155.5px;top:361.5px;width:5px;height:5px;background:#8e8e8e;"></div>
<div style="left:1175px;top:361px;width:6px;height:6px;background:#8e8e8e;border-radius:50%;"></div>
<svg style="left:1194.5px;top:360.5px;" width="6" height="7" viewBox="0 0 6 7"><path d="M0 0l6 3.500-6 3.500z" fill="#8e8e8e"/></svg>
<svg style="left:1211.5px;top:359.5px;" width="10.5" height="9" viewBox="0 0 10.5 9"><path d="M0 1h4l1 1.500h5.500v6.500h-10.500z" fill="#d8d8d8"/></svg>
<svg style="left:1232.5px;top:359.5px;" width="10" height="10" viewBox="0 0 10 10"><path d="M0.600 0.600h8.800v6l-2.800 2.800h-6z" fill="none" stroke="#d8d8d8" stroke-width="1.200"/><path d="M9.400 6.600h-2.800v2.800" fill="#d8d8d8" stroke="#d8d8d8" stroke-width="0.800"/></svg>
<svg style="left:1252.5px;top:359px;" width="9" height="10" viewBox="0 0 9 10"><path d="M0 2h9M3 2v-1.300h3v1.300" fill="none" stroke="#d8d8d8" stroke-width="1.100"/><path d="M1.200 3h6.600v6.600h-6.600z" fill="none" stroke="#d8d8d8" stroke-width="1.100"/><path d="M3.500 4.500v3.600M5.500 4.500v3.600" stroke="#d8d8d8" stroke-width="0.900"/></svg>
<div style="left:1033px;top:372.5px;width:247px;height:320.5px;background:#4c4e4b;"></div>
<div style="left:1033px;top:372.5px;width:247px;height:19px;background:#414340;"></div>
<div style="left:1033px;top:372.5px;width:39.5px;height:19px;background:#4c4e4b;"></div>
<span style="left:1038.5px;top:376.86px;font-size:7.6px;line-height:9.88px;color:#f4f4f4;font-weight:bold;transform:scaleX(0.888);transform-origin:0 50%;">Warstwy</span>
<svg style="left:1267.5px;top:379px;" width="9" height="6" viewBox="0 0 9 6"><path d="M0 0.700h9M0 3h9M0 5.300h9" stroke="#b8b8b8" stroke-width="1"/></svg>
<div style="left:1036px;top:397.5px;width:73.5px;height:13.5px;background:#424441;border-radius:2px;"></div>
<svg style="left:1040px;top:400.5px;" width="8" height="8" viewBox="0 0 8 8"><circle cx="4.800" cy="3.200" r="2.400" fill="none" stroke="#e0e0e0" stroke-width="1.100"/><path d="M3 5l-2.300 2.500" stroke="#e0e0e0" stroke-width="1.200"/></svg>
<span style="left:1050px;top:399.36px;font-size:7.6px;line-height:9.88px;color:#ededed;transform:scaleX(0.803);transform-origin:0 50%;">Rodzaj</span>
<svg style="left:1101px;top:402.5px;" width="6" height="4" viewBox="0 0 6 4"><path d="M0.500 0.500l2.500 2.500 2.500-2.500" fill="none" stroke="#a0a0a0" stroke-width="1"/></svg>
<svg style="left:1132.2px;top:400.2px;" width="8.8" height="7.9" viewBox="0 0 10 9"><rect x="0.600" y="0.600" width="8.800" height="7.800" fill="none" stroke="#dedede" stroke-width="1.100"/><path d="M1.500 7l2.200-2.800 1.800 1.800 1.300-1 1.700 2z" fill="#dedede"/></svg>
<svg style="left:1149px;top:400px;" width="8" height="8" viewBox="0 0 9 9"><circle cx="4.500" cy="4.500" r="3.800" fill="none" stroke="#dedede" stroke-width="1.100"/><path d="M4.500 0.700a3.800 3.800 0 0 1 0 7.600z" fill="#dedede" transform="rotate(45 4.500 4.500)"/></svg>
<span style="left:1165.5px;top:397.38px;font-size:10.5px;line-height:13.65px;color:#dedede;font-weight:bold;font-family:'Liberation Serif',serif;">T</span>
<svg style="left:1180.8px;top:399.8px;" width="8.6" height="8.6" viewBox="0 0 10 10"><rect x="1.800" y="1.800" width="6.400" height="6.400" fill="none" stroke="#dedede" stroke-width="1.100"/><rect x="0" y="0" width="2.600" height="2.600" fill="#dedede"/><rect x="7.400" y="0" width="2.600" height="2.600" fill="#dedede"/><rect x="0" y="7.400" width="2.600" height="2.600" fill="#dedede"/><rect x="7.400" y="7.400" width="2.600" height="2.600" fill="#dedede"/></svg>
<svg style="left:1197.3px;top:399.5px;" width="7.8" height="9.1" viewBox="0 0 9 10.500"><path d="M0.600 0.600h5l2.800 2.800v6.500h-7.800z" fill="none" stroke="#dedede" stroke-width="1.100"/><rect x="3.200" y="5.600" width="5" height="4.400" fill="#dedede"/></svg>
<div style="left:1228px;top:397px;width:6.5px;height:6.5px;background:#f2f2f2;border-radius:50%;"></div>
<div style="left:1230.8px;top:403px;width:1px;height:4px;background:#8a8a8a;"></div>
<div style="left:1036px;top:415.5px;width:135px;height:13.5px;background:#424441;border-radius:2px;"></div>
<span style="left:1040.5px;top:417.36px;font-size:7.6px;line-height:9.88px;color:#ededed;transform:scaleX(0.852);transform-origin:0 50%;">Normalnie</span>
<svg style="left:1163.5px;top:420.5px;" width="6" height="4" viewBox="0 0 6 4"><path d="M0.500 0.500l2.500 2.500 2.500-2.500" fill="none" stroke="#a0a0a0" stroke-width="1"/></svg>
<span style="left:1176px;top:417.06px;font-size:7.6px;line-height:9.88px;color:#c8c8c8;transform:scaleX(0.861);transform-origin:0 50%;">Krycie:</span>
<div style="left:1199px;top:415.5px;width:23.5px;height:13.5px;background:#424441;border-radius:2px;"></div>
<span style="left:1202px;top:417.36px;font-size:7.6px;line-height:9.88px;color:#ededed;transform:scaleX(0.926);transform-origin:0 50%;">100%</span>
<svg style="left:1225px;top:420.5px;" width="6" height="4" viewBox="0 0 6 4"><path d="M0.500 0.500l2.500 2.500 2.500-2.500" fill="none" stroke="#a0a0a0" stroke-width="1"/></svg>
<span style="left:1037px;top:436.36px;font-size:7.6px;line-height:9.88px;color:#c8c8c8;transform:scaleX(0.876);transform-origin:0 50%;">Zablokuj:</span>
<svg style="left:1070.5px;top:437px;" width="8" height="8" viewBox="0 0 8 8"><rect x="0.500" y="0.500" width="7" height="7" fill="none" stroke="#b8b8b8" stroke-width="0.800"/><rect x="0.500" y="0.500" width="3.500" height="3.500" fill="#b8b8b8"/><rect x="4" y="4" width="3.500" height="3.500" fill="#b8b8b8"/></svg>
<svg style="left:1084.5px;top:436.5px;" width="9" height="9" viewBox="0 0 9 9"><path d="M8.500 0.500c-2 1-4 3-5 5l1 1c2-1.500 3.500-3.500 4-6zM3 6c-1.500 0-1.500 1-1.700 1.800s-0.700 1-1.300 1c1.500 0.800 3.800 0 3.900-1.900z" fill="#8c8c8c"/></svg>
<svg style="left:1098.5px;top:436px;" width="10" height="10" viewBox="0 0 10 10"><path d="M5 0l1.700 2h-1.100v2.400h2.400v-1.100l2 1.700-2 1.700v-1.100h-2.400v2.400h1.100l-1.700 2-1.700-2h1.100v-2.400h-2.400v1.100l-2-1.700 2-1.700v1.100h2.400v-2.400h-1.100z" fill="#dedede"/></svg>
<svg style="left:1113.5px;top:436px;" width="10" height="10" viewBox="0 0 10 10"><path d="M2.500 0v7.500h7.500M0 2.500h7.500v7.500" fill="none" stroke="#dedede" stroke-width="1.200"/></svg>
<svg style="left:1130px;top:435.5px;" width="8" height="10" viewBox="0 0 8 10"><rect x="0.300" y="4.300" width="7.400" height="5.400" rx="0.800" fill="#dedede"/><path d="M1.800 4.500v-1.500a2.200 2.200 0 0 1 4.400 0v1.500" fill="none" stroke="#dedede" stroke-width="1.100"/></svg>
<span style="left:1158px;top:436.36px;font-size:7.6px;line-height:9.88px;color:#c8c8c8;transform:scaleX(0.875);transform-origin:0 50%;">Wypełnienie:</span>
<div style="left:1199px;top:434.5px;width:23.5px;height:13.5px;background:#424441;border-radius:2px;"></div>
<span style="left:1202px;top:436.36px;font-size:7.6px;line-height:9.88px;color:#ededed;transform:scaleX(0.926);transform-origin:0 50%;">100%</span>
<svg style="left:1225px;top:439.5px;" width="6" height="4" viewBox="0 0 6 4"><path d="M0.500 0.500l2.500 2.500 2.500-2.500" fill="none" stroke="#a0a0a0" stroke-width="1"/></svg>
<div style="left:1033px;top:451.5px;width:247px;height:0.8px;background:#444;"></div>
<div style="left:1053px;top:452px;width:0.8px;height:225px;background:#484a48;"></div>
<svg style="left:1038.5px;top:462.2px;" width="9" height="7" viewBox="0 0 9 7"><path d="M0.300 3.500q4.200-5 8.400 0q-4.200 5-8.400 0z" fill="#ececec"/><circle cx="4.500" cy="3.500" r="1.500" fill="#4c4e4b"/></svg>
<svg style="left:1055px;top:463.7px;" width="6" height="4" viewBox="0 0 6 4"><path d="M0.500 0.500l2.500 2.500 2.500-2.500" fill="none" stroke="#8c8c8c" stroke-width="1"/></svg>
<svg style="left:1063.5px;top:461.2px;" width="10" height="8.5" viewBox="0 0 10 8.5"><path d="M0 0.800h3.800l1 1.400h5.200v6.300h-10z" fill="#e8e8e8"/><path d="M0 3h10" stroke="#4c4e4b" stroke-width="0.700"/></svg>
<svg style="left:1076.5px;top:460.7px;" width="5" height="10" viewBox="0 0 5 10"><rect x="0.700" y="0.700" width="3.600" height="3.800" rx="1.200" fill="none" stroke="#dcdcdc" stroke-width="1.100"/><rect x="0.700" y="5.500" width="3.600" height="3.800" rx="1.200" fill="none" stroke="#dcdcdc" stroke-width="1.100"/><path d="M2.500 3.200v3.600" stroke="#dcdcdc" stroke-width="1"/></svg>
<div style="left:1085.3px;top:455.8px;width:20.3px;height:18.8px;background:#000;"></div>
<svg style="left:1087.3px;top:457px;" width="16.5" height="17" viewBox="0 0 16.5 17"><path d="M3.500 0.500h9.500l3 2.500-1.500 3-1.500-0.800v11.300h-9.500v-11.300l-1.500 0.800-1.500-3z" fill="#fff"/></svg>
<span style="left:1112.2px;top:460.76px;font-size:7.6px;line-height:9.88px;color:#eaeaea;transform:scaleX(0.883);transform-origin:0 50%;">Place your artwork in this group</span>
<div style="left:1033px;top:478.8px;width:236px;height:0.7px;background:#484a48;"></div>
<svg style="left:1040px;top:488.4px;" width="7" height="9" viewBox="0 0 7 9"><path d="M0.500 0v8.500h6v-8.500" fill="none" stroke="#585a58" stroke-width="0.700"/></svg>
<div style="left:1066px;top:482.0px;width:21.8px;height:20px;background:#fff;background-image:conic-gradient(#c6c6c6 25%,#fff 0 50%,#c6c6c6 0 75%,#fff 0);background-size:5.400px 5.400px;"></div>
<div style="left:1072.5px;top:487.5px;width:5.5px;height:6px;background:#e0623a;border-radius:40%;"></div>
<div style="left:1077.5px;top:493.0px;width:10.3px;height:9px;background:#3a3c3a;"></div>
<svg style="left:1079.8px;top:493.8px;" width="6" height="7.5" viewBox="0 0 6 7.5"><path d="M0.500 0.500h3.200l1.800 1.800v4.700h-5z" fill="#f4f4f4"/><rect x="2.600" y="3.600" width="3" height="3" fill="#3a3c3a" stroke="#f4f4f4" stroke-width="0.600"/></svg>
<span style="left:1093.4px;top:487.46px;font-size:7.6px;line-height:9.88px;color:#eaeaea;transform:scaleX(0.859);transform-origin:0 50%;">Warstwa 1</span>
<div style="left:1033px;top:505.5px;width:236px;height:0.7px;background:#484a48;"></div>
<svg style="left:1040px;top:515.12px;" width="7" height="9" viewBox="0 0 7 9"><path d="M0.500 0v8.500h6v-8.500" fill="none" stroke="#585a58" stroke-width="0.700"/></svg>
<div style="left:1066px;top:508.7px;width:21.8px;height:20px;background:#8e8e8e;background-image:repeating-linear-gradient(90deg,rgba(255,255,255,0.100) 0 1px,transparent 1px 3px),repeating-linear-gradient(0deg,rgba(0,0,0,0.080) 0 1px,transparent 1px 2px);border:1px solid #a8a8a8;box-sizing:border-box;"></div>
<span style="left:1093.4px;top:514.18px;font-size:7.6px;line-height:9.88px;color:#eaeaea;transform:scaleX(0.879);transform-origin:0 50%;">Heather Tecture (Optional)</span>
<div style="left:1033px;top:532.2px;width:236px;height:0.7px;background:#484a48;"></div>
<svg style="left:1040px;top:541.8399999999999px;" width="7" height="9" viewBox="0 0 7 9"><path d="M0.500 0v8.500h6v-8.500" fill="none" stroke="#585a58" stroke-width="0.700"/></svg>
<div style="left:1066px;top:535.4px;width:21.8px;height:20px;background:#fff;background-image:conic-gradient(#c6c6c6 25%,#fff 0 50%,#c6c6c6 0 75%,#fff 0);background-size:5.400px 5.400px;"></div>
<div style="left:1073px;top:544.9px;width:6px;height:1.5px;background:#33336a;"></div>
<div style="left:1077.5px;top:546.4px;width:10.3px;height:9px;background:#3a3c3a;"></div>
<svg style="left:1079.8px;top:547.1999999999999px;" width="6" height="7.5" viewBox="0 0 6 7.5"><path d="M0.500 0.500h3.200l1.800 1.800v4.700h-5z" fill="#f4f4f4"/><rect x="2.600" y="3.600" width="3" height="3" fill="#3a3c3a" stroke="#f4f4f4" stroke-width="0.600"/></svg>
<span style="left:1093.4px;top:540.9px;font-size:7.6px;line-height:9.88px;color:#eaeaea;transform:scaleX(0.849);transform-origin:0 50%;">smieszne3-3</span>
<div style="left:1033px;top:559.0px;width:236px;height:0.7px;background:#484a48;"></div>
<svg style="left:1040px;top:568.56px;" width="7" height="9" viewBox="0 0 7 9"><path d="M0.500 0v8.500h6v-8.500" fill="none" stroke="#585a58" stroke-width="0.700"/></svg>
<div style="left:1066px;top:562.2px;width:21.8px;height:20px;background:#fff;background-image:conic-gradient(#c6c6c6 25%,#fff 0 50%,#c6c6c6 0 75%,#fff 0);background-size:5.400px 5.400px;"></div>
<div style="left:1073.5px;top:570.7px;width:5.5px;height:4.5px;background:#1c1c3c;"></div>
<div style="left:1077.5px;top:573.2px;width:10.3px;height:9px;background:#3a3c3a;"></div>
<svg style="left:1079.8px;top:574.0px;" width="6" height="7.5" viewBox="0 0 6 7.5"><path d="M0.500 0.500h3.200l1.800 1.800v4.700h-5z" fill="#f4f4f4"/><rect x="2.600" y="3.600" width="3" height="3" fill="#3a3c3a" stroke="#f4f4f4" stroke-width="0.600"/></svg>
<span style="left:1093.4px;top:567.62px;font-size:7.6px;line-height:9.88px;color:#eaeaea;transform:scaleX(0.849);transform-origin:0 50%;">smieszne3-2</span>
<div style="left:1033px;top:585.7px;width:236px;height:0.7px;background:#484a48;"></div>
<svg style="left:1040px;top:595.28px;" width="7" height="9" viewBox="0 0 7 9"><path d="M0.500 0v8.500h6v-8.500" fill="none" stroke="#585a58" stroke-width="0.700"/></svg>
<div style="left:1066px;top:588.9px;width:21.8px;height:20px;background:#fff;background-image:conic-gradient(#c6c6c6 25%,#fff 0 50%,#c6c6c6 0 75%,#fff 0);background-size:5.400px 5.400px;"></div>
<div style="left:1075.5px;top:594.4px;width:2px;height:8px;background:#2a2a44;"></div>
<div style="left:1077.5px;top:599.9px;width:10.3px;height:9px;background:#3a3c3a;"></div>
<svg style="left:1079.8px;top:600.6999999999999px;" width="6" height="7.5" viewBox="0 0 6 7.5"><path d="M0.500 0.500h3.200l1.800 1.800v4.700h-5z" fill="#f4f4f4"/><rect x="2.600" y="3.600" width="3" height="3" fill="#3a3c3a" stroke="#f4f4f4" stroke-width="0.600"/></svg>
<span style="left:1093.4px;top:594.34px;font-size:7.6px;line-height:9.88px;color:#eaeaea;transform:scaleX(0.849);transform-origin:0 50%;">smieszne3-1</span>
<div style="left:1033px;top:612.4px;width:236px;height:0.7px;background:#484a48;"></div>
<svg style="left:1040px;top:622.0px;" width="7" height="9" viewBox="0 0 7 9"><path d="M0.500 0v8.500h6v-8.500" fill="none" stroke="#585a58" stroke-width="0.700"/></svg>
<div style="left:1066px;top:615.6px;width:21.8px;height:20px;background:#fff;background-image:conic-gradient(#c6c6c6 25%,#fff 0 50%,#c6c6c6 0 75%,#fff 0);background-size:5.400px 5.400px;"></div>
<div style="left:1073.5px;top:621.1px;width:2.5px;height:8px;background:#b8202a;"></div>
<div style="left:1077.5px;top:626.6px;width:10.3px;height:9px;background:#3a3c3a;"></div>
<svg style="left:1079.8px;top:627.4px;" width="6" height="7.5" viewBox="0 0 6 7.5"><path d="M0.500 0.500h3.200l1.800 1.800v4.700h-5z" fill="#f4f4f4"/><rect x="2.600" y="3.600" width="3" height="3" fill="#3a3c3a" stroke="#f4f4f4" stroke-width="0.600"/></svg>
<span style="left:1093.4px;top:621.06px;font-size:7.6px;line-height:9.88px;color:#eaeaea;transform:scaleX(0.848);transform-origin:0 50%;">smieszne2-25</span>
<div style="left:1053.5px;top:639.72px;width:215.5px;height:26px;background:#646464;"></div>
<div style="left:1033px;top:639.1px;width:236px;height:0.7px;background:#484a48;"></div>
<svg style="left:1064px;top:640.3px;" width="25.8" height="24" viewBox="0 0 25.8 24"><path d="M0.500 5v-4.500h5M20.800 0.500h4.500v4.500M25.300 19v4.500h-4.500M5.500 23.500h-5v-4.500" fill="none" stroke="#f0f0f0" stroke-width="1"/></svg>
<div style="left:1066px;top:642.3px;width:21.8px;height:20px;background:#fff;background-image:conic-gradient(#c6c6c6 25%,#fff 0 50%,#c6c6c6 0 75%,#fff 0);background-size:5.400px 5.400px;"></div>
<div style="left:1072px;top:649.3px;width:9px;height:2.5px;background:#1f9c94;"></div>
<div style="left:1072px;top:653.8px;width:9px;height:2px;background:#2a2a2a;"></div>
<div style="left:1077.5px;top:653.3px;width:10.3px;height:9px;background:#3a3c3a;"></div>
<svg style="left:1079.8px;top:654.0999999999999px;" width="6" height="7.5" viewBox="0 0 6 7.5"><path d="M0.500 0.500h3.200l1.800 1.800v4.700h-5z" fill="#f4f4f4"/><rect x="2.600" y="3.600" width="3" height="3" fill="#3a3c3a" stroke="#f4f4f4" stroke-width="0.600"/></svg>
<span style="left:1093.4px;top:647.78px;font-size:7.6px;line-height:9.88px;color:#eaeaea;transform:scaleX(0.848);transform-origin:0 50%;">smieszne2-23</span>
<svg style="left:1038.5px;top:649.22px;" width="9" height="7" viewBox="0 0 9 7"><path d="M0.300 3.500q4.200-5 8.400 0q-4.200 5-8.400 0z" fill="#ececec"/><circle cx="4.500" cy="3.500" r="1.500" fill="#4c4e4b"/></svg>
<div style="left:1033px;top:665.3px;width:236px;height:0.7px;background:#454545;"></div>
<div style="left:1066px;top:668.3px;width:21.8px;height:9px;background:#fff;background-image:conic-gradient(#c6c6c6 25%,#fff 0 50%,#c6c6c6 0 75%,#fff 0);background-size:5.400px 5.400px;"></div>
<div style="left:1270px;top:452px;width:10px;height:225px;background:#474946;"></div>
<div style="left:1271.5px;top:584.5px;width:6.5px;height:80px;background:#6c6c6c;"></div>
<div style="left:1033px;top:677px;width:247px;height:16px;background:#4c4e4b;border-top:1px solid #454545;box-sizing:border-box;"></div>
<svg style="left:1144px;top:682px;" width="10" height="6" viewBox="0 0 10 6"><rect x="0.600" y="0.600" width="4.800" height="4.800" rx="2.400" fill="none" stroke="#7c7c7c" stroke-width="1.100"/><rect x="4.600" y="0.600" width="4.800" height="4.800" rx="2.400" fill="none" stroke="#7c7c7c" stroke-width="1.100"/></svg>
<span style="left:1162.5px;top:678.62px;font-size:9.5px;line-height:12.35px;color:#e0e0e0;font-style:italic;font-family:'Liberation Serif',serif;">fx</span>
<svg style="left:1170.5px;top:688px;" width="3" height="2" viewBox="0 0 3 2"><path d="M0 0h3l-1.500 2z" fill="#d0d0d0"/></svg>
<svg style="left:1180.5px;top:680.5px;" width="10" height="8.5" viewBox="0 0 10 8.5"><rect x="0" y="0" width="10" height="8.500" fill="#e0e0e0"/><circle cx="5" cy="4.250" r="2.500" fill="#4c4e4b"/></svg>
<svg style="left:1199px;top:680.5px;" width="9.5" height="9.5" viewBox="0 0 9.5 9.5"><circle cx="4.750" cy="4.750" r="4" fill="none" stroke="#e0e0e0" stroke-width="1.100"/><path d="M4.750 0.750a4 4 0 0 1 0 8z" fill="#e0e0e0" transform="rotate(45 4.750 4.750)"/></svg>
<svg style="left:1216px;top:680.5px;" width="10.5" height="9" viewBox="0 0 10.5 9"><path d="M0 1h4l1 1.500h5.500v6.500h-10.500z" fill="#e0e0e0"/></svg>
<svg style="left:1234.5px;top:680.5px;" width="10" height="10" viewBox="0 0 10 10"><path d="M0.600 0.600h8.800v6l-2.800 2.800h-6z" fill="none" stroke="#e0e0e0" stroke-width="1.200"/><path d="M9.400 6.600h-2.800v2.800" fill="#e0e0e0" stroke="#e0e0e0" stroke-width="0.800"/></svg>
<svg style="left:1252.5px;top:680px;" width="9" height="10" viewBox="0 0 9 10"><path d="M0 2h9M3 2v-1.300h3v1.300" fill="none" stroke="#d8d8d8" stroke-width="1.100"/><path d="M1.200 3h6.600v6.600h-6.600z" fill="none" stroke="#d8d8d8" stroke-width="1.100"/><path d="M3.500 4.500v3.600M5.500 4.500v3.600" stroke="#d8d8d8" stroke-width="0.900"/></svg>
<div style="left:25.5px;top:48px;width:1.5px;height:645px;background:#3a3a3a;"></div>
<div style="left:3.5px;top:62.5px;width:19.5px;height:14px;background:#2f2f2f;border-radius:2px;"></div>
<svg style="left:7.6px;top:63.7px;overflow:visible;" width="11.6" height="11.6" viewBox="0 0 14 14"><path d="M7 0.300l2.300 2.800h-1.600v3.200h3.200v-1.600l2.800 2.300-2.800 2.300v-1.600h-3.200v3.200h1.600l-2.300 2.800-2.300-2.800h1.600v-3.200h-3.200v1.600l-2.800-2.300 2.800-2.300v1.600h3.200v-3.200h-1.600z" fill="#e4e4e4"/></svg>
<svg style="left:20px;top:73.7px;" width="2.6" height="2.6" viewBox="0 0 2.6 2.6"><path d="M2.600 0v2.600h-2.600z" fill="#bdbdbd"/></svg>
<svg style="left:7.6px;top:80.5px;overflow:visible;" width="11.6" height="11.6" viewBox="0 0 14 14"><rect x="1" y="2" width="12" height="10" fill="none" stroke="#e4e4e4" stroke-width="1.300" stroke-dasharray="2.400 1.400"/></svg>
<svg style="left:20px;top:90.5px;" width="2.6" height="2.6" viewBox="0 0 2.6 2.6"><path d="M2.600 0v2.600h-2.600z" fill="#bdbdbd"/></svg>
<svg style="left:7.6px;top:97.8px;overflow:visible;" width="11.6" height="11.6" viewBox="0 0 14 14"><ellipse cx="7.500" cy="5.500" rx="5.500" ry="3.800" fill="none" stroke="#e4e4e4" stroke-width="1.300" transform="rotate(-12 7.500 5.500)"/><path d="M3.500 8.200c-1.500 1-1 3 0.500 2.500s0.500-2-0.500-1.500c0.500 1.800 0 3-0.500 4" fill="none" stroke="#e4e4e4" stroke-width="1.100"/></svg>
<svg style="left:20px;top:107.8px;" width="2.6" height="2.6" viewBox="0 0 2.6 2.6"><path d="M2.600 0v2.600h-2.600z" fill="#bdbdbd"/></svg>
<svg style="left:7.6px;top:115.7px;overflow:visible;" width="11.6" height="11.6" viewBox="0 0 14 14"><path d="M1.500 12.500l7-7" stroke="#e4e4e4" stroke-width="2.300"/><path d="M10.500 0.500v3M9 2h3M12 5.500v2M11 6.500h2M6.500 1.500v2M5.500 2.500h2" stroke="#e4e4e4" stroke-width="1"/></svg>
<svg style="left:20px;top:125.7px;" width="2.6" height="2.6" viewBox="0 0 2.6 2.6"><path d="M2.600 0v2.600h-2.600z" fill="#bdbdbd"/></svg>
<svg style="left:7.6px;top:132.2px;overflow:visible;" width="11.6" height="11.6" viewBox="0 0 14 14"><path d="M3.500 0v10.500h10.500M0 3.500h10.500v10.500" fill="none" stroke="#e4e4e4" stroke-width="1.700"/></svg>
<svg style="left:20px;top:142.2px;" width="2.6" height="2.6" viewBox="0 0 2.6 2.6"><path d="M2.600 0v2.600h-2.600z" fill="#bdbdbd"/></svg>
<svg style="left:7.6px;top:150.2px;overflow:visible;" width="11.6" height="11.6" viewBox="0 0 14 14"><path d="M1 13l1-3 5.500-5.500 2 2-5.500 5.500z" fill="none" stroke="#e4e4e4" stroke-width="1.200"/><path d="M7 3.500l3.500 3.500M8.500 5l2.300-2.800a1.500 1.500 0 0 1 2 2l-2.800 2.300z" fill="#e4e4e4" stroke="#e4e4e4" stroke-width="1.200"/></svg>
<svg style="left:20px;top:160.2px;" width="2.6" height="2.6" viewBox="0 0 2.6 2.6"><path d="M2.600 0v2.600h-2.600z" fill="#bdbdbd"/></svg>
<svg style="left:7.6px;top:167.2px;overflow:visible;" width="11.6" height="11.6" viewBox="0 0 14 14"><rect x="-1" y="4.200" width="16" height="5.600" rx="2.600" fill="#e4e4e4" transform="rotate(-45 7 7)"/><circle cx="6" cy="7" r="0.600" fill="#4d4d4d"/><circle cx="8" cy="7" r="0.600" fill="#4d4d4d"/><circle cx="7" cy="6" r="0.600" fill="#4d4d4d"/><circle cx="7" cy="8" r="0.600" fill="#4d4d4d"/></svg>
<svg style="left:20px;top:177.2px;" width="2.6" height="2.6" viewBox="0 0 2.6 2.6"><path d="M2.600 0v2.600h-2.600z" fill="#bdbdbd"/></svg>
<svg style="left:7.6px;top:184.7px;overflow:visible;" width="11.6" height="11.6" viewBox="0 0 14 14"><path d="M13 0.500c-2.500 1.500-5 4.300-6.500 7l1.500 1.500c2.500-2 4.500-5 5-8.500z" fill="#e4e4e4"/><path d="M5.500 8.500c-2 0-2.500 1.500-2.500 2.500s-1 2-2.500 2c2 1.200 6 0.500 6.500-3z" fill="#e4e4e4"/></svg>
<svg style="left:20px;top:194.7px;" width="2.6" height="2.6" viewBox="0 0 2.6 2.6"><path d="M2.600 0v2.600h-2.600z" fill="#bdbdbd"/></svg>
<svg style="left:7.6px;top:202.2px;overflow:visible;" width="11.6" height="11.6" viewBox="0 0 14 14"><path d="M5 0.800h4c1.200 1.500 0.300 3.200-0.500 4.800v1.900h4v3h-11v-3h4v-1.900c-0.800-1.600-1.700-3.300-0.500-4.800z" fill="#e4e4e4"/><rect x="1.500" y="11.500" width="11" height="1.600" fill="#e4e4e4"/></svg>
<svg style="left:20px;top:212.2px;" width="2.6" height="2.6" viewBox="0 0 2.6 2.6"><path d="M2.600 0v2.600h-2.600z" fill="#bdbdbd"/></svg>
<svg style="left:7.6px;top:219.2px;overflow:visible;" width="11.6" height="11.6" viewBox="0 0 14 14"><path d="M13 0.500c-2.500 1.500-5 4.300-6.500 7l1.500 1.500c2.500-2 4.500-5 5-8.500z" fill="#e4e4e4"/><path d="M5.500 8.500c-2 0-2.500 1.500-2.500 2.500s-1 2-2.500 2c2 1.200 6 0.500 6.500-3z" fill="#e4e4e4"/><path d="M1 5a3.500 3.500 0 0 1 6.500-1.500" fill="none" stroke="#e4e4e4" stroke-width="1.200"/><path d="M0 2.500l1 3 2.800-1z" fill="#e4e4e4"/></svg>
<svg style="left:20px;top:229.2px;" width="2.6" height="2.6" viewBox="0 0 2.6 2.6"><path d="M2.600 0v2.600h-2.600z" fill="#bdbdbd"/></svg>
<svg style="left:7.6px;top:236.7px;overflow:visible;" width="11.6" height="11.6" viewBox="0 0 14 14"><path d="M1 9l6-7 5.500 4.500-5 6h-3.500z" fill="#e4e4e4"/><path d="M3 10.500l3.500-4" stroke="#4d4d4d" stroke-width="1"/><path d="M7 13h6" stroke="#e4e4e4" stroke-width="1.200"/></svg>
<svg style="left:20px;top:246.7px;" width="2.6" height="2.6" viewBox="0 0 2.6 2.6"><path d="M2.600 0v2.600h-2.600z" fill="#bdbdbd"/></svg>
<svg style="left:7.6px;top:253.7px;overflow:visible;" width="11.6" height="11.6" viewBox="0 0 14 14"><path d="M2 6l5-5 5.500 5.500-5 5z" fill="none" stroke="#e4e4e4" stroke-width="1.300"/><path d="M3 6.500h8.500l-4 4z" fill="#e4e4e4"/><path d="M12.500 8c1 1.500 1.500 2.500 1 3.500s-2 0.800-2-0.500c0-1 0.500-2 1-3z" fill="#e4e4e4"/><path d="M6 1v-1.500" stroke="#e4e4e4"/></svg>
<svg style="left:20px;top:263.7px;" width="2.6" height="2.6" viewBox="0 0 2.6 2.6"><path d="M2.600 0v2.600h-2.600z" fill="#bdbdbd"/></svg>
<svg style="left:7.6px;top:271.2px;overflow:visible;" width="11.6" height="11.6" viewBox="0 0 14 14"><path d="M4 13.500l1-5c-1.500-1-1.500-3 0-4.500s4-3 6-2.500 2.500 3 1.500 4.500-3 1.500-4 2.500l-1.500 5z" fill="#e4e4e4"/></svg>
<svg style="left:20px;top:281.2px;" width="2.6" height="2.6" viewBox="0 0 2.6 2.6"><path d="M2.600 0v2.600h-2.600z" fill="#bdbdbd"/></svg>
<svg style="left:7.6px;top:288.7px;overflow:visible;" width="11.6" height="11.6" viewBox="0 0 14 14"><rect x="1" y="2.500" width="12" height="9" rx="2.500" fill="#e4e4e4"/><circle cx="4.500" cy="5.500" r="0.900" fill="#4d4d4d"/><circle cx="8.500" cy="8.500" r="0.900" fill="#4d4d4d"/><circle cx="9.500" cy="5" r="0.700" fill="#4d4d4d"/><circle cx="5" cy="9" r="0.600" fill="#4d4d4d"/></svg>
<svg style="left:20px;top:298.7px;" width="2.6" height="2.6" viewBox="0 0 2.6 2.6"><path d="M2.600 0v2.600h-2.600z" fill="#bdbdbd"/></svg>
<svg style="left:7.6px;top:305.7px;overflow:visible;" width="11.6" height="11.6" viewBox="0 0 14 14"><path d="M2 13l1-6.500 5-4 4.500 4.500-4 5z" fill="none" stroke="#e4e4e4" stroke-width="1.300"/><circle cx="7" cy="8" r="1.200" fill="#e4e4e4"/><path d="M2.500 12.500l4-4" stroke="#e4e4e4" stroke-width="1"/></svg>
<svg style="left:20px;top:315.7px;" width="2.6" height="2.6" viewBox="0 0 2.6 2.6"><path d="M2.600 0v2.600h-2.600z" fill="#bdbdbd"/></svg>
<svg style="left:7.6px;top:323.2px;overflow:visible;" width="11.6" height="11.6" viewBox="0 0 14 14"><path d="M1.500 1h11v3.200h-1.200l-0.500-1.700h-2.500v9l1.700 0.400v1.100h-6v-1.100l1.700-0.400v-9h-2.500l-0.500 1.700h-1.200z" fill="#e4e4e4"/></svg>
<svg style="left:7.6px;top:341.2px;overflow:visible;" width="11.6" height="11.6" viewBox="0 0 14 14"><path d="M3 0.500v11.500l2.800-2.600 2 4.300 2-0.900-2-4.200h3.800z" fill="#1e1e1e" stroke="#e4e4e4" stroke-width="1"/></svg>
<svg style="left:20px;top:351.2px;" width="2.6" height="2.6" viewBox="0 0 2.6 2.6"><path d="M2.600 0v2.600h-2.600z" fill="#bdbdbd"/></svg>
<svg style="left:7.6px;top:358.2px;overflow:visible;" width="11.6" height="11.6" viewBox="0 0 14 14"><rect x="0.700" y="2" width="12.600" height="10" fill="none" stroke="#e4e4e4" stroke-width="1.300"/></svg>
<svg style="left:20px;top:368.2px;" width="2.6" height="2.6" viewBox="0 0 2.6 2.6"><path d="M2.600 0v2.600h-2.600z" fill="#bdbdbd"/></svg>
<svg style="left:7.6px;top:375.7px;overflow:visible;" width="11.6" height="11.6" viewBox="0 0 14 14"><path d="M3.500 13.500c-1-2-3-4-3-5s1.500-1 2.500 0.500v-6c0-1 1.500-1 1.500 0v-1.500c0-1 1.600-1 1.600 0v1c0-1 1.600-1 1.600 0v1.500c0-1 1.500-1 1.500 0v6.500c0 1.500-0.500 2.500-1 3z" fill="#e4e4e4"/></svg>
<svg style="left:7.6px;top:393.2px;overflow:visible;" width="11.6" height="11.6" viewBox="0 0 14 14"><circle cx="5.500" cy="5.500" r="4.200" fill="none" stroke="#e4e4e4" stroke-width="1.500"/><path d="M8.700 8.700l4.300 4.300" stroke="#e4e4e4" stroke-width="2"/></svg>
<svg style="left:7.6px;top:410.2px;overflow:visible;" width="11.6" height="11.6" viewBox="0 0 14 14"><circle cx="2.500" cy="7" r="1.400" fill="#e4e4e4"/><circle cx="7" cy="7" r="1.400" fill="#e4e4e4"/><circle cx="11.500" cy="7" r="1.400" fill="#e4e4e4"/></svg>
<svg style="left:3.5px;top:427.5px;" width="8" height="8" viewBox="0 0 8 8"><rect x="0" y="0" width="5" height="5" fill="#1e1e1e" stroke="#ddd" stroke-width="0.800"/><rect x="3" y="3" width="5" height="5" fill="#eee"/></svg>
<svg style="left:15px;top:427px;" width="9" height="9" viewBox="0 0 9 9"><path d="M2 1.500h4.500v5" fill="none" stroke="#e4e4e4" stroke-width="1.100"/><path d="M0 1.500l2.500-1.800v3.600zM6.500 9l-1.800-2.500h3.600z" fill="#e4e4e4"/></svg>
<div style="left:10px;top:446px;width:12px;height:12px;background:#ffffff;border:1px solid #555;box-sizing:border-box;"></div>
<div style="left:3.5px;top:439px;width:12px;height:12px;background:#2a2a2a;border:1px solid #d8d8d8;box-sizing:border-box;"></div>
<svg style="left:7px;top:464px;" width="13" height="11" viewBox="0 0 13 11"><rect x="0.600" y="0.600" width="11.800" height="9.800" fill="none" stroke="#e4e4e4" stroke-width="1.200"/><circle cx="6.500" cy="5.500" r="2.600" fill="none" stroke="#e4e4e4" stroke-width="1" stroke-dasharray="1.500 1"/></svg>
<svg style="left:7px;top:481px;" width="14" height="12" viewBox="0 0 14 12"><rect x="3.600" y="0.600" width="9.800" height="7.300" fill="none" stroke="#e4e4e4" stroke-width="1.200"/><rect x="0.600" y="3.600" width="9.800" height="7.300" fill="#4d4d4d" stroke="#e4e4e4" stroke-width="1.200"/></svg>
<div style="left:27px;top:61.5px;width:966px;height:10.5px;background:#474947;"></div>
<div style="left:27px;top:72px;width:12px;height:610px;background:#474947;"></div>
<div style="left:27px;top:71.6px;width:966px;height:0.8px;background:#353735;"></div>
<div style="left:38.6px;top:61.5px;width:0.8px;height:620.5px;background:#353735;"></div>
<div style="left:27px;top:61.5px;width:12px;height:10.5px;background:#4d4f4d;border-right:1px solid #3a3c3a;border-bottom:1px solid #3a3c3a;box-sizing:border-box;"></div>
<div style="left:53.6px;top:62.5px;width:0.8px;height:9.5px;background:#676967;"></div>
<span style="left:55.6px;top:62.77px;font-size:6.5px;line-height:8.45px;color:#9a9c9a;">2</span>
<div style="left:132.3px;top:62.5px;width:0.8px;height:9.5px;background:#676967;"></div>
<span style="left:134.3px;top:62.77px;font-size:6.5px;line-height:8.45px;color:#9a9c9a;">1</span>
<div style="left:211.0px;top:62.5px;width:0.8px;height:9.5px;background:#676967;"></div>
<span style="left:213.0px;top:62.77px;font-size:6.5px;line-height:8.45px;color:#9a9c9a;">0</span>
<div style="left:289.7px;top:62.5px;width:0.8px;height:9.5px;background:#676967;"></div>
<span style="left:291.7px;top:62.77px;font-size:6.5px;line-height:8.45px;color:#9a9c9a;">1</span>
<div style="left:368.4px;top:62.5px;width:0.8px;height:9.5px;background:#676967;"></div>
<span style="left:370.4px;top:62.77px;font-size:6.5px;line-height:8.45px;color:#9a9c9a;">2</span>
<div style="left:447.1px;top:62.5px;width:0.8px;height:9.5px;background:#676967;"></div>
<span style="left:449.1px;top:62.77px;font-size:6.5px;line-height:8.45px;color:#9a9c9a;">3</span>
<div style="left:525.8px;top:62.5px;width:0.8px;height:9.5px;background:#676967;"></div>
<span style="left:527.8px;top:62.77px;font-size:6.5px;line-height:8.45px;color:#9a9c9a;">4</span>
<div style="left:604.5px;top:62.5px;width:0.8px;height:9.5px;background:#676967;"></div>
<span style="left:606.5px;top:62.77px;font-size:6.5px;line-height:8.45px;color:#9a9c9a;">5</span>
<div style="left:683.2px;top:62.5px;width:0.8px;height:9.5px;background:#676967;"></div>
<span style="left:685.2px;top:62.77px;font-size:6.5px;line-height:8.45px;color:#9a9c9a;">6</span>
<div style="left:761.9px;top:62.5px;width:0.8px;height:9.5px;background:#676967;"></div>
<span style="left:763.9px;top:62.77px;font-size:6.5px;line-height:8.45px;color:#9a9c9a;">7</span>
<div style="left:840.6px;top:62.5px;width:0.8px;height:9.5px;background:#676967;"></div>
<span style="left:842.6px;top:62.77px;font-size:6.5px;line-height:8.45px;color:#9a9c9a;">8</span>
<div style="left:919.3px;top:62.5px;width:0.8px;height:9.5px;background:#676967;"></div>
<span style="left:921.3px;top:62.77px;font-size:6.5px;line-height:8.45px;color:#9a9c9a;">9</span>
<svg style="left:27px;top:60px;" width="966" height="12" viewBox="0 0 966 12"><rect x="18.7" y="9.5" width="0.700" height="2.5" fill="#555755"/><rect x="34.5" y="9.5" width="0.700" height="2.5" fill="#555755"/><rect x="42.3" y="9.5" width="0.700" height="2.5" fill="#555755"/><rect x="50.2" y="9.5" width="0.700" height="2.5" fill="#555755"/><rect x="58.1" y="9.5" width="0.700" height="2.5" fill="#555755"/><rect x="66.0" y="7.5" width="0.700" height="4.5" fill="#555755"/><rect x="73.8" y="9.5" width="0.700" height="2.5" fill="#555755"/><rect x="81.7" y="9.5" width="0.700" height="2.5" fill="#555755"/><rect x="89.6" y="9.5" width="0.700" height="2.5" fill="#555755"/><rect x="97.4" y="9.5" width="0.700" height="2.5" fill="#555755"/><rect x="113.2" y="9.5" width="0.700" height="2.5" fill="#555755"/><rect x="121.0" y="9.5" width="0.700" height="2.5" fill="#555755"/><rect x="128.9" y="9.5" width="0.700" height="2.5" fill="#555755"/><rect x="136.8" y="9.5" width="0.700" height="2.5" fill="#555755"/><rect x="144.7" y="7.5" width="0.700" height="4.5" fill="#555755"/><rect x="152.5" y="9.5" width="0.700" height="2.5" fill="#555755"/><rect x="160.4" y="9.5" width="0.700" height="2.5" fill="#555755"/><rect x="168.3" y="9.5" width="0.700" height="2.5" fill="#555755"/><rect x="176.1" y="9.5" width="0.700" height="2.5" fill="#555755"/><rect x="191.9" y="9.5" width="0.700" height="2.5" fill="#555755"/><rect x="199.7" y="9.5" width="0.700" height="2.5" fill="#555755"/><rect x="207.6" y="9.5" width="0.700" height="2.5" fill="#555755"/><rect x="215.5" y="9.5" width="0.700" height="2.5" fill="#555755"/><rect x="223.3" y="7.5" width="0.700" height="4.5" fill="#555755"/><rect x="231.2" y="9.5" width="0.700" height="2.5" fill="#555755"/><rect x="239.1" y="9.5" width="0.700" height="2.5" fill="#555755"/><rect x="247.0" y="9.5" width="0.700" height="2.5" fill="#555755"/><rect x="254.8" y="9.5" width="0.700" height="2.5" fill="#555755"/><rect x="270.6" y="9.5" width="0.700" height="2.5" fill="#555755"/><rect x="278.4" y="9.5" width="0.700" height="2.5" fill="#555755"/><rect x="286.3" y="9.5" width="0.700" height="2.5" fill="#555755"/><rect x="294.2" y="9.5" width="0.700" height="2.5" fill="#555755"/><rect x="302.1" y="7.5" width="0.700" height="4.5" fill="#555755"/><rect x="309.9" y="9.5" width="0.700" height="2.5" fill="#555755"/><rect x="317.8" y="9.5" width="0.700" height="2.5" fill="#555755"/><rect x="325.7" y="9.5" width="0.700" height="2.5" fill="#555755"/><rect x="333.5" y="9.5" width="0.700" height="2.5" fill="#555755"/><rect x="349.3" y="9.5" width="0.700" height="2.5" fill="#555755"/><rect x="357.1" y="9.5" width="0.700" height="2.5" fill="#555755"/><rect x="365.0" y="9.5" width="0.700" height="2.5" fill="#555755"/><rect x="372.9" y="9.5" width="0.700" height="2.5" fill="#555755"/><rect x="380.8" y="7.5" width="0.700" height="4.5" fill="#555755"/><rect x="388.6" y="9.5" width="0.700" height="2.5" fill="#555755"/><rect x="396.5" y="9.5" width="0.700" height="2.5" fill="#555755"/><rect x="404.4" y="9.5" width="0.700" height="2.5" fill="#555755"/><rect x="412.2" y="9.5" width="0.700" height="2.5" fill="#555755"/><rect x="428.0" y="9.5" width="0.700" height="2.5" fill="#555755"/><rect x="435.8" y="9.5" width="0.700" height="2.5" fill="#555755"/><rect x="443.7" y="9.5" width="0.700" height="2.5" fill="#555755"/><rect x="451.6" y="9.5" width="0.700" height="2.5" fill="#555755"/><rect x="459.4" y="7.5" width="0.700" height="4.5" fill="#555755"/><rect x="467.3" y="9.5" width="0.700" height="2.5" fill="#555755"/><rect x="475.2" y="9.5" width="0.700" height="2.5" fill="#555755"/><rect x="483.1" y="9.5" width="0.700" height="2.5" fill="#555755"/><rect x="490.9" y="9.5" width="0.700" height="2.5" fill="#555755"/><rect x="506.7" y="9.5" width="0.700" height="2.5" fill="#555755"/><rect x="514.5" y="9.5" width="0.700" height="2.5" fill="#555755"/><rect x="522.4" y="9.5" width="0.700" height="2.5" fill="#555755"/><rect x="530.3" y="9.5" width="0.700" height="2.5" fill="#555755"/><rect x="538.1" y="7.5" width="0.700" height="4.5" fill="#555755"/><rect x="546.0" y="9.5" width="0.700" height="2.5" fill="#555755"/><rect x="553.9" y="9.5" width="0.700" height="2.5" fill="#555755"/><rect x="561.8" y="9.5" width="0.700" height="2.5" fill="#555755"/><rect x="569.6" y="9.5" width="0.700" height="2.5" fill="#555755"/><rect x="585.4" y="9.5" width="0.700" height="2.5" fill="#555755"/><rect x="593.2" y="9.5" width="0.700" height="2.5" fill="#555755"/><rect x="601.1" y="9.5" width="0.700" height="2.5" fill="#555755"/><rect x="609.0" y="9.5" width="0.700" height="2.5" fill="#555755"/><rect x="616.9" y="7.5" width="0.700" height="4.5" fill="#555755"/><rect x="624.7" y="9.5" width="0.700" height="2.5" fill="#555755"/><rect x="632.6" y="9.5" width="0.700" height="2.5" fill="#555755"/><rect x="640.5" y="9.5" width="0.700" height="2.5" fill="#555755"/><rect x="648.3" y="9.5" width="0.700" height="2.5" fill="#555755"/><rect x="664.1" y="9.5" width="0.700" height="2.5" fill="#555755"/><rect x="671.9" y="9.5" width="0.700" height="2.5" fill="#555755"/><rect x="679.8" y="9.5" width="0.700" height="2.5" fill="#555755"/><rect x="687.7" y="9.5" width="0.700" height="2.5" fill="#555755"/><rect x="695.5" y="7.5" width="0.700" height="4.5" fill="#555755"/><rect x="703.4" y="9.5" width="0.700" height="2.5" fill="#555755"/><rect x="711.3" y="9.5" width="0.700" height="2.5" fill="#555755"/><rect x="719.2" y="9.5" width="0.700" height="2.5" fill="#555755"/><rect x="727.0" y="9.5" width="0.700" height="2.5" fill="#555755"/><rect x="742.8" y="9.5" width="0.700" height="2.5" fill="#555755"/><rect x="750.6" y="9.5" width="0.700" height="2.5" fill="#555755"/><rect x="758.5" y="9.5" width="0.700" height="2.5" fill="#555755"/><rect x="766.4" y="9.5" width="0.700" height="2.5" fill="#555755"/><rect x="774.2" y="7.5" width="0.700" height="4.5" fill="#555755"/><rect x="782.1" y="9.5" width="0.700" height="2.5" fill="#555755"/><rect x="790.0" y="9.5" width="0.700" height="2.5" fill="#555755"/><rect x="797.9" y="9.5" width="0.700" height="2.5" fill="#555755"/><rect x="805.7" y="9.5" width="0.700" height="2.5" fill="#555755"/><rect x="821.5" y="9.5" width="0.700" height="2.5" fill="#555755"/><rect x="829.3" y="9.5" width="0.700" height="2.5" fill="#555755"/><rect x="837.2" y="9.5" width="0.700" height="2.5" fill="#555755"/><rect x="845.1" y="9.5" width="0.700" height="2.5" fill="#555755"/><rect x="853.0" y="7.5" width="0.700" height="4.5" fill="#555755"/><rect x="860.8" y="9.5" width="0.700" height="2.5" fill="#555755"/><rect x="868.7" y="9.5" width="0.700" height="2.5" fill="#555755"/><rect x="876.6" y="9.5" width="0.700" height="2.5" fill="#555755"/><rect x="884.4" y="9.5" width="0.700" height="2.5" fill="#555755"/><rect x="900.2" y="9.5" width="0.700" height="2.5" fill="#555755"/><rect x="908.0" y="9.5" width="0.700" height="2.5" fill="#555755"/><rect x="915.9" y="9.5" width="0.700" height="2.5" fill="#555755"/><rect x="923.8" y="9.5" width="0.700" height="2.5" fill="#555755"/><rect x="931.6" y="7.5" width="0.700" height="4.5" fill="#555755"/><rect x="939.5" y="9.5" width="0.700" height="2.5" fill="#555755"/><rect x="947.4" y="9.5" width="0.700" height="2.5" fill="#555755"/><rect x="955.3" y="9.5" width="0.700" height="2.5" fill="#555755"/><rect x="963.1" y="9.5" width="0.700" height="2.5" fill="#555755"/></svg>
<div style="left:29px;top:82.0px;width:10px;height:0.8px;background:#676967;"></div>
<span style="left:29px;top:82.78px;font-size:6.5px;line-height:8.45px;color:#9a9c9a;">0</span>
<div style="left:29px;top:160.7px;width:10px;height:0.8px;background:#676967;"></div>
<span style="left:29px;top:161.47px;font-size:6.5px;line-height:8.45px;color:#9a9c9a;">1</span>
<div style="left:29px;top:239.4px;width:10px;height:0.8px;background:#676967;"></div>
<span style="left:29px;top:240.18px;font-size:6.5px;line-height:8.45px;color:#9a9c9a;">2</span>
<div style="left:29px;top:318.1px;width:10px;height:0.8px;background:#676967;"></div>
<span style="left:29px;top:318.88px;font-size:6.5px;line-height:8.45px;color:#9a9c9a;">3</span>
<div style="left:29px;top:396.8px;width:10px;height:0.8px;background:#676967;"></div>
<span style="left:29px;top:397.57px;font-size:6.5px;line-height:8.45px;color:#9a9c9a;">4</span>
<div style="left:29px;top:475.5px;width:10px;height:0.8px;background:#676967;"></div>
<span style="left:29px;top:476.27px;font-size:6.5px;line-height:8.45px;color:#9a9c9a;">5</span>
<div style="left:29px;top:554.2px;width:10px;height:0.8px;background:#676967;"></div>
<span style="left:29px;top:554.98px;font-size:6.5px;line-height:8.45px;color:#9a9c9a;">6</span>
<div style="left:29px;top:632.9px;width:10px;height:0.8px;background:#676967;"></div>
<span style="left:29px;top:633.67px;font-size:6.5px;line-height:8.45px;color:#9a9c9a;">7</span>
<svg style="left:27px;top:72px;" width="12" height="610" viewBox="0 0 12 610"><rect x="9.5" y="2.1" width="2.5" height="0.700" fill="#555755"/><rect x="9.5" y="17.9" width="2.5" height="0.700" fill="#555755"/><rect x="9.5" y="25.7" width="2.5" height="0.700" fill="#555755"/><rect x="9.5" y="33.6" width="2.5" height="0.700" fill="#555755"/><rect x="9.5" y="41.5" width="2.5" height="0.700" fill="#555755"/><rect x="7.5" y="49.3" width="4.5" height="0.700" fill="#555755"/><rect x="9.5" y="57.2" width="2.5" height="0.700" fill="#555755"/><rect x="9.5" y="65.1" width="2.5" height="0.700" fill="#555755"/><rect x="9.5" y="73.0" width="2.5" height="0.700" fill="#555755"/><rect x="9.5" y="80.8" width="2.5" height="0.700" fill="#555755"/><rect x="9.5" y="96.6" width="2.5" height="0.700" fill="#555755"/><rect x="9.5" y="104.4" width="2.5" height="0.700" fill="#555755"/><rect x="9.5" y="112.3" width="2.5" height="0.700" fill="#555755"/><rect x="9.5" y="120.2" width="2.5" height="0.700" fill="#555755"/><rect x="7.5" y="128.1" width="4.5" height="0.700" fill="#555755"/><rect x="9.5" y="135.9" width="2.5" height="0.700" fill="#555755"/><rect x="9.5" y="143.8" width="2.5" height="0.700" fill="#555755"/><rect x="9.5" y="151.7" width="2.5" height="0.700" fill="#555755"/><rect x="9.5" y="159.5" width="2.5" height="0.700" fill="#555755"/><rect x="9.5" y="175.3" width="2.5" height="0.700" fill="#555755"/><rect x="9.5" y="183.1" width="2.5" height="0.700" fill="#555755"/><rect x="9.5" y="191.0" width="2.5" height="0.700" fill="#555755"/><rect x="9.5" y="198.9" width="2.5" height="0.700" fill="#555755"/><rect x="7.5" y="206.8" width="4.5" height="0.700" fill="#555755"/><rect x="9.5" y="214.6" width="2.5" height="0.700" fill="#555755"/><rect x="9.5" y="222.5" width="2.5" height="0.700" fill="#555755"/><rect x="9.5" y="230.4" width="2.5" height="0.700" fill="#555755"/><rect x="9.5" y="238.2" width="2.5" height="0.700" fill="#555755"/><rect x="9.5" y="254.0" width="2.5" height="0.700" fill="#555755"/><rect x="9.5" y="261.8" width="2.5" height="0.700" fill="#555755"/><rect x="9.5" y="269.7" width="2.5" height="0.700" fill="#555755"/><rect x="9.5" y="277.6" width="2.5" height="0.700" fill="#555755"/><rect x="7.5" y="285.4" width="4.5" height="0.700" fill="#555755"/><rect x="9.5" y="293.3" width="2.5" height="0.700" fill="#555755"/><rect x="9.5" y="301.2" width="2.5" height="0.700" fill="#555755"/><rect x="9.5" y="309.1" width="2.5" height="0.700" fill="#555755"/><rect x="9.5" y="316.9" width="2.5" height="0.700" fill="#555755"/><rect x="9.5" y="332.7" width="2.5" height="0.700" fill="#555755"/><rect x="9.5" y="340.5" width="2.5" height="0.700" fill="#555755"/><rect x="9.5" y="348.4" width="2.5" height="0.700" fill="#555755"/><rect x="9.5" y="356.3" width="2.5" height="0.700" fill="#555755"/><rect x="7.5" y="364.1" width="4.5" height="0.700" fill="#555755"/><rect x="9.5" y="372.0" width="2.5" height="0.700" fill="#555755"/><rect x="9.5" y="379.9" width="2.5" height="0.700" fill="#555755"/><rect x="9.5" y="387.8" width="2.5" height="0.700" fill="#555755"/><rect x="9.5" y="395.6" width="2.5" height="0.700" fill="#555755"/><rect x="9.5" y="411.4" width="2.5" height="0.700" fill="#555755"/><rect x="9.5" y="419.2" width="2.5" height="0.700" fill="#555755"/><rect x="9.5" y="427.1" width="2.5" height="0.700" fill="#555755"/><rect x="9.5" y="435.0" width="2.5" height="0.700" fill="#555755"/><rect x="7.5" y="442.9" width="4.5" height="0.700" fill="#555755"/><rect x="9.5" y="450.7" width="2.5" height="0.700" fill="#555755"/><rect x="9.5" y="458.6" width="2.5" height="0.700" fill="#555755"/><rect x="9.5" y="466.5" width="2.5" height="0.700" fill="#555755"/><rect x="9.5" y="474.3" width="2.5" height="0.700" fill="#555755"/><rect x="9.5" y="490.1" width="2.5" height="0.700" fill="#555755"/><rect x="9.5" y="497.9" width="2.5" height="0.700" fill="#555755"/><rect x="9.5" y="505.8" width="2.5" height="0.700" fill="#555755"/><rect x="9.5" y="513.7" width="2.5" height="0.700" fill="#555755"/><rect x="7.5" y="521.5" width="4.5" height="0.700" fill="#555755"/><rect x="9.5" y="529.4" width="2.5" height="0.700" fill="#555755"/><rect x="9.5" y="537.3" width="2.5" height="0.700" fill="#555755"/><rect x="9.5" y="545.2" width="2.5" height="0.700" fill="#555755"/><rect x="9.5" y="553.0" width="2.5" height="0.700" fill="#555755"/><rect x="9.5" y="568.8" width="2.5" height="0.700" fill="#555755"/><rect x="9.5" y="576.6" width="2.5" height="0.700" fill="#555755"/><rect x="9.5" y="584.5" width="2.5" height="0.700" fill="#555755"/><rect x="9.5" y="592.4" width="2.5" height="0.700" fill="#555755"/><rect x="7.5" y="600.2" width="4.5" height="0.700" fill="#555755"/><rect x="9.5" y="608.1" width="2.5" height="0.700" fill="#555755"/></svg>
<div style="left:27px;top:682px;width:966px;height:11.5px;background:#4b4d4b;"></div>
<div style="left:27px;top:682px;width:30px;height:11.5px;background:#3b3b3b;"></div>
<span style="left:35px;top:683.93px;font-size:6.26px;line-height:8.14px;color:#e0e0e0;">100%</span>
<span style="left:76px;top:683.58px;font-size:6.81px;line-height:8.85px;color:#c4c4c4;">Liczba warstw: 21, 1 grupa</span>
<svg style="left:175.5px;top:685px;" width="4" height="6" viewBox="0 0 4 6"><path d="M0.600 0.600l2.400 2.400-2.400 2.400" fill="none" stroke="#b0b0b0" stroke-width="1"/></svg>
<div style="left:0px;top:693.3px;width:1280px;height:26.7px;background:#0b1a37;"></div>
<svg style="left:10.3px;top:700.6px;" width="11.6" height="11.6" viewBox="0 0 11.6 11.6"><path d="M0 1.600l4.800-0.700v4.600h-4.800zM5.600 0.800l6-0.800v5.500h-6zM0 6.300h4.800v4.600l-4.800-0.700zM5.600 6.300h6v5.500l-6-0.800z" fill="#f4f4f4"/></svg>
<div style="left:34.4px;top:693.3px;width:31.2px;height:26.7px;background:#2a3a57;"></div>
<div style="left:34.4px;top:718.3px;width:31.2px;height:1.7px;background:#8cbcea;"></div>
<svg style="left:42px;top:699.5px;" width="16" height="13" viewBox="0 0 16 13"><path d="M0 1.500h6l1.500 1.500h8.500v10h-16z" fill="#f5d266"/><path d="M0 4.500h16v8.500h-16z" fill="#fbe38e"/><rect x="2.500" y="7.500" width="11" height="5.500" fill="#4ea4e0"/><rect x="5.500" y="10" width="5" height="3" fill="#f4f4f4"/></svg>
<div style="left:69.4px;top:718.3px;width:26px;height:1.7px;background:#8cbcea;"></div>
<svg style="left:73.5px;top:698px;" width="17" height="17" viewBox="0 0 17 17"><circle cx="8.500" cy="8.500" r="8" fill="#e8501e"/><path d="M8.500 0.500a8 8 0 0 1 7.800 6.200c-1.500-2.500-4-3.200-5.800-2.200c-2.200-2-5.500-1-6.500 1c-1 2-0.500 4 0.500 5c-2-0.500-3.500-2.500-3.800-4.500a8 8 0 0 1 7.800-5.500z" fill="#f8b028"/><circle cx="8.800" cy="9" r="3.800" fill="#3a3a9a"/><path d="M5 9a3.800 3.800 0 0 0 7.600 0.500c-1 1.500-3 2-4.500 1s-1.800-2.800-0.800-4c-1.300 0.300-2.300 1.200-2.300 2.500z" fill="#e8501e"/></svg>
<div style="left:107.8px;top:698.8px;width:15px;height:15px;background:#4c4c4c;border-radius:2px;"></div>
<svg style="left:110.3px;top:700.3px;" width="10" height="12" viewBox="0 0 10 12"><path d="M9 0.500l-8 2.800v3.200l8 2.500v3l-8-2.500v-0.500M9 0.500v3l-8 2.800" fill="none" stroke="#f89820" stroke-width="2"/></svg>
<svg style="left:140.6px;top:698.5px;" width="16" height="15" viewBox="0 0 16 15"><path d="M5 1h10v8.500h-10z" fill="#3f9ae4"/><path d="M1 11l9-2 5 3-9 2.500z" fill="#f2f2f2"/><path d="M6 2h8v6.500h-8z" fill="#5cb4f4"/></svg>
<div style="left:167px;top:718.3px;width:26.8px;height:1.7px;background:#8cbcea;"></div>
<div style="left:173.4px;top:699px;width:14.6px;height:14px;background:#0a2233;border:1px solid #2484ac;box-sizing:border-box;"></div>
<span style="left:176.6px;top:700.68px;font-size:8.5px;line-height:11.05px;color:#3aa4d4;font-weight:bold;transform:scaleX(0.818);transform-origin:0 50%;">Ps</span>
<svg style="left:1155.6px;top:704px;" width="9.5" height="6" viewBox="0 0 9.5 6"><path d="M0.700 5.300l4.050-4.300 4.050 4.300" fill="none" stroke="#f0f0f0" stroke-width="1.300"/></svg>
<svg style="left:1172.5px;top:702.5px;" width="10" height="10" viewBox="0 0 10 10"><path d="M0.800 9.500a8.700 8.700 0 0 1 8.700-8.700M3.300 9.500a6.200 6.200 0 0 1 6.200-6.200M5.800 9.500a3.700 3.700 0 0 1 3.700-3.700" fill="none" stroke="#e8e8e8" stroke-width="1.100"/><circle cx="8.700" cy="8.700" r="1.100" fill="#e8e8e8"/></svg>
<svg style="left:1187px;top:701.5px;" width="11" height="10" viewBox="0 0 11 10"><path d="M0.600 3.500h2.200l2.700-2.700v8.400l-2.700-2.700h-2.200z" fill="none" stroke="#f0f0f0" stroke-width="1"/><path d="M7 3.200a2.500 2.500 0 0 1 0 3.600M8.500 1.800a4.500 4.500 0 0 1 0 6.400" fill="none" stroke="#c8c8c8" stroke-width="0.900"/></svg>
<span style="left:1213px;top:695.14px;font-size:8.4px;line-height:10.92px;color:#f4f4f4;transform:scaleX(0.871);transform-origin:0 50%;">08:09</span>
<span style="left:1204.4px;top:707.04px;font-size:8.4px;line-height:10.92px;color:#f4f4f4;transform:scaleX(0.861);transform-origin:0 50%;">27.07.2018</span>
<svg style="left:1252px;top:701px;" width="12" height="10.5" viewBox="0 0 12 10.5"><path d="M0.600 0.600h10.800v7h-3.600l-1.800 2-1.800-2h-3.600z" fill="none" stroke="#f0f0f0" stroke-width="1.200"/></svg>
<div style="left:490px;top:676.7px;width:289px;height:37px;background:#ffffff;border-radius:3px;box-shadow:0 0 2px rgba(0,0,0,0.500);"></div>
<div style="left:490px;top:676.7px;width:32px;height:37px;background:#393939;border-radius:3px 0 0 3px;"></div>
<div style="left:500px;top:676.7px;width:38px;height:37px;background:#393939;border-radius:0 19px 19px 0;"></div>
<div style="left:500.5px;top:681px;width:26.5px;height:26.5px;background:#1d8fd8;border-radius:50%;"></div>
<div style="left:510px;top:688.5px;width:2.2px;height:11.5px;background:#fff;"></div>
<div style="left:515.3px;top:688.5px;width:2.2px;height:11.5px;background:#fff;"></div>
<div style="left:553px;top:680px;width:79px;height:29.5px;background:#f1f1f1;border-radius:2px;"></div>
<span style="left:558.7px;top:681.95px;font-size:9px;line-height:11.7px;color:#444;transform:scaleX(0.927);transform-origin:0 50%;">Recording...</span>
<span style="left:559.5px;top:693.67px;font-size:12.5px;line-height:16.25px;color:#222;font-weight:bold;transform:scaleX(0.969);transform-origin:0 50%;">00:03:14</span>
<svg style="left:643px;top:688px;" width="13" height="15" viewBox="0 0 13 15"><path d="M0.500 0v15M3.500 0v15M6.500 0v15M9.500 0v15M12.500 0v15" stroke="#d8d8d8" stroke-width="0.900"/></svg>
<svg style="left:672px;top:693.5px;" width="44" height="10" viewBox="0 0 44 10"><path d="M0 6l43-3.500v3.500z" fill="#cfe6f6"/><path d="M0 6.500h43" stroke="#2b82b6" stroke-width="1.900"/><path d="M43 2.800v7" stroke="#2a6f98" stroke-width="1.300"/></svg>
<svg style="left:723.5px;top:685.5px;" width="19" height="19" viewBox="0 0 19 19"><circle cx="7.500" cy="7.500" r="6.300" fill="#fafafa" stroke="#c2c2c2" stroke-width="1.100"/><circle cx="7.500" cy="7.500" r="2.800" fill="#b4b4b4"/><path d="M3 15.500h9" stroke="#c8c8c8" stroke-width="1"/><path d="M13 15.500h4M15 13.500v4" stroke="#9a9a9a" stroke-width="0.900"/></svg>
<svg style="left:751px;top:686.5px;" width="17" height="17" viewBox="0 0 17 17"><path d="M1 16l1.500-5 9.500-9.500 3.500 3.500-9.500 9.500z" fill="#3c3c3c"/><path d="M1 16l1.500-5 3.500 3.500z" fill="#6a6a6a"/><path d="M10.500 3l3.500 3.500" stroke="#fff" stroke-width="0.800"/><path d="M13 0.800l1.200-0.600 2.600 2.600-0.600 1.200z" fill="#3c3c3c"/></svg>
<div style="left:53px;top:72.5px;width:278px;height:535px;background:#ffffff;box-shadow:0 0 2.500px rgba(0,0,0,0.600);outline:1px solid rgba(120,150,180,0.450);outline-offset:-1px;"></div>
<div style="left:60px;top:78px;width:8.5px;height:10.5px;background:#f7dc82;border-radius:1px;"></div>
<div style="left:60px;top:78px;width:2.9749999999999996px;height:10.5px;background:#f1cd5c;border-radius:1px;"></div>
<div style="left:73.5px;top:78px;width:0.8px;height:10.5px;background:#d0d0d0;"></div>
<div style="left:82px;top:77.5px;width:8.5px;height:11px;background:#fff;border:1px solid #777;box-sizing:border-box;"></div>
<svg style="left:83px;top:80px;" width="7" height="7" viewBox="0 0 7 7"><path d="M1.200 3.800l1.600 1.800 3-4" fill="none" stroke="#c03030" stroke-width="1.200"/></svg>
<div style="left:96.5px;top:78px;width:8.5px;height:10.5px;background:#f7dc82;border-radius:1px;"></div>
<div style="left:96.5px;top:78px;width:2.9749999999999996px;height:10.5px;background:#f1cd5c;border-radius:1px;"></div>
<svg style="left:110px;top:81.5px;" width="7" height="6" viewBox="0 0 7 6"><path d="M0.500 0.800h6" stroke="#333" stroke-width="1"/><path d="M0.500 2.600h6l-3 3z" fill="#333"/></svg>
<div style="left:120.5px;top:78px;width:0.8px;height:10.5px;background:#d0d0d0;"></div>
<span style="left:126px;top:78.15px;font-size:9px;line-height:11.7px;color:#111;transform:scaleX(0.891);transform-origin:0 50%;">zmienione rozmiary</span>
<div style="left:250px;top:82.5px;width:9px;height:1px;background:#8a8a8a;"></div>
<div style="left:280.5px;top:78.5px;width:8px;height:8px;background:transparent;border:1px solid #333;box-sizing:border-box;"></div>
<svg style="left:311.5px;top:78px;" width="9" height="9" viewBox="0 0 9 9"><path d="M0.700 0.700l7.600 7.600M8.300 0.700l-7.600 7.600" stroke="#333" stroke-width="1.100"/></svg>
<div style="left:53px;top:93.5px;width:37.5px;height:15.5px;background:#1979ca;"></div>
<span style="left:65.5px;top:95.58px;font-size:8.8px;line-height:11.44px;color:#ffffff;transform:scaleX(0.846);transform-origin:0 50%;">Plik</span>
<div style="left:93px;top:94px;width:76.5px;height:16px;background:#f5f6f7;border:1px solid #dadbdc;border-bottom:none;box-sizing:border-box;"></div>
<span style="left:100.5px;top:95.58px;font-size:8.8px;line-height:11.44px;color:#222;transform:scaleX(0.872);transform-origin:0 50%;">Narzędzia główne</span>
<span style="left:181px;top:95.58px;font-size:8.8px;line-height:11.44px;color:#222;transform:scaleX(0.898);transform-origin:0 50%;">Udostępnianie</span>
<span style="left:251px;top:95.58px;font-size:8.8px;line-height:11.44px;color:#222;transform:scaleX(0.92);transform-origin:0 50%;">Widok</span>
<svg style="left:305px;top:99px;" width="7" height="5" viewBox="0 0 7 5"><path d="M0.600 4.200l2.900-3 2.900 3" fill="none" stroke="#9a9a9a" stroke-width="1"/></svg>
<div style="left:317.5px;top:96px;width:10px;height:10px;background:#1979ca;border-radius:50%;"></div>
<span style="left:320.5px;top:96.0px;font-size:8px;line-height:10.4px;color:#fff;font-weight:bold;">?</span>
<div style="left:54px;top:109.5px;width:276px;height:60px;background:#f5f6f7;border-top:1px solid #dadbdc;border-bottom:1px solid #dadbdc;box-sizing:border-box;"></div>
<div style="left:54px;top:110.5px;width:211px;height:58px;background:#f1f5fa;"></div>
<div style="left:90px;top:111px;width:0.8px;height:57px;background:#dde3ec;"></div>
<div style="left:147.5px;top:111px;width:0.8px;height:57px;background:#dde3ec;"></div>
<div style="left:177px;top:111px;width:0.8px;height:57px;background:#dde3ec;"></div>
<div style="left:220.5px;top:111px;width:0.8px;height:57px;background:#dde3ec;"></div>
<div style="left:264.5px;top:111px;width:0.8px;height:57px;background:#dde3ec;"></div>
<div style="left:63.7px;top:113.5px;width:18.5px;height:19px;background:#fbfcfe;border:1px solid #dfe5ee;box-sizing:border-box;"></div>
<svg style="left:68px;top:116.3px;" width="9.5" height="11.2" viewBox="0 0 11 13"><rect x="0.900" y="1.900" width="9.200" height="10.200" fill="#fafafa" stroke="#222" stroke-width="1.400"/><rect x="3.300" y="0.300" width="4.400" height="2.600" fill="#999"/></svg>
<div style="left:110px;top:113.5px;width:18.5px;height:19px;background:#fbfcfe;border:1px solid #dfe5ee;box-sizing:border-box;"></div>
<svg style="left:114.5px;top:119px;" width="10" height="10" viewBox="0 0 10 10"><path d="M1.500 1.500l7 7M8.500 1.500l-7 7" stroke="#d0122c" stroke-width="2.300"/></svg>
<div style="left:153px;top:113.5px;width:18.5px;height:19px;background:#fbfcfe;border:1px solid #dfe5ee;box-sizing:border-box;"></div>
<div style="left:158.5px;top:117.5px;width:8px;height:12px;background:#f6d674;"></div>
<div style="left:158.5px;top:117.5px;width:2.5px;height:12px;background:#f0c850;"></div>
<div style="left:189.5px;top:113.5px;width:18.5px;height:19px;background:#fbfcfe;border:1px solid #dfe5ee;box-sizing:border-box;"></div>
<svg style="left:192px;top:117px;" width="14" height="14" viewBox="0 0 14 14"><rect x="1" y="5" width="8" height="7" fill="#e9eef5" stroke="#c2cad6" stroke-width="0.800"/><path d="M9.500 3v8M7 8.500l2.500 3 2.500-3" fill="none" stroke="#38a838" stroke-width="1.800"/><rect x="7.500" y="1" width="3" height="3" fill="#f3d46c"/></svg>
<div style="left:233px;top:113.5px;width:18.5px;height:19px;background:#fbfcfe;border:1px solid #dfe5ee;box-sizing:border-box;"></div>
<svg style="left:236.5px;top:118px;" width="12" height="12" viewBox="0 0 12 12"><rect x="0.500" y="0.500" width="5" height="5" fill="#4aa8e8"/><rect x="6.500" y="0.500" width="5" height="5" fill="#4aa8e8"/><rect x="0.500" y="6.500" width="5" height="5" fill="#4aa8e8"/><rect x="6.500" y="6.500" width="5" height="5" fill="#4aa8e8"/><path d="M0 6h12M6 0v12" stroke="#fff" stroke-width="0.800"/></svg>
<span style="left:57.5px;top:136.58px;font-size:8.8px;line-height:11.44px;color:#1c1c1c;transform:scaleX(0.84);transform-origin:0 50%;">Schowek</span>
<svg style="left:70.5px;top:149px;" width="4" height="3" viewBox="0 0 4 3"><path d="M0 0h4l-2 2.500z" fill="#333"/></svg>
<span style="left:93px;top:136.58px;font-size:8.8px;line-height:11.44px;color:#1c1c1c;transform:scaleX(0.886);transform-origin:0 50%;">Organizowanie</span>
<svg style="left:117px;top:149px;" width="4" height="3" viewBox="0 0 4 3"><path d="M0 0h4l-2 2.500z" fill="#333"/></svg>
<span style="left:153px;top:136.58px;font-size:8.8px;line-height:11.44px;color:#1c1c1c;transform:scaleX(0.827);transform-origin:0 50%;">Nowy</span>
<svg style="left:160px;top:149px;" width="4" height="3" viewBox="0 0 4 3"><path d="M0 0h4l-2 2.500z" fill="#333"/></svg>
<span style="left:179.5px;top:136.58px;font-size:8.8px;line-height:11.44px;color:#1c1c1c;transform:scaleX(0.903);transform-origin:0 50%;">Otwieranie</span>
<svg style="left:196.5px;top:149px;" width="4" height="3" viewBox="0 0 4 3"><path d="M0 0h4l-2 2.500z" fill="#333"/></svg>
<span style="left:222.5px;top:136.58px;font-size:8.8px;line-height:11.44px;color:#1c1c1c;transform:scaleX(0.812);transform-origin:0 50%;">Zaznaczanie</span>
<svg style="left:240.5px;top:149px;" width="4" height="3" viewBox="0 0 4 3"><path d="M0 0h4l-2 2.500z" fill="#333"/></svg>
<svg style="left:62px;top:178.5px;" width="8.5" height="7.65" viewBox="0 0 10 9"><path d="M9.500 4.500h-8.500M4.800 0.800l-3.800 3.700 3.800 3.700" fill="none" stroke="#5a5a5a" stroke-width="1.300"/></svg>
<svg style="left:81px;top:178.5px;" width="8.5" height="7.65" viewBox="0 0 10 9"><path d="M0.500 4.500h8.500M5.200 0.800l3.800 3.700-3.800 3.700" fill="none" stroke="#dcdcdc" stroke-width="1.300"/></svg>
<svg style="left:99px;top:180.5px;" width="5" height="3" viewBox="0 0 5 3"><path d="M0 0h5l-2.500 3z" fill="#8a8a8a"/></svg>
<svg style="left:111.5px;top:177.5px;" width="8" height="8.8" viewBox="0 0 10 11"><path d="M5 10.500v-9.500M1 5l4-4 4 4" fill="none" stroke="#444" stroke-width="1.400"/></svg>
<div style="left:124.5px;top:174px;width:140.5px;height:16.5px;background:#fff;border:1px solid #e4e4e4;box-sizing:border-box;"></div>
<div style="left:127px;top:176px;width:9px;height:11px;background:#f7dc82;"></div>
<svg style="left:142px;top:180.3px;" width="3" height="4.5" viewBox="0 0 4 6"><path d="M0.700 0.700l2.200 2.300-2.200 2.300" fill="none" stroke="#555" stroke-width="1.100"/></svg>
<span style="left:149.5px;top:176.35px;font-size:9px;line-height:11.7px;color:#111;transform:scaleX(0.854);transform-origin:0 50%;">proje...</span>
<svg style="left:178.5px;top:180.3px;" width="3" height="4.5" viewBox="0 0 4 6"><path d="M0.700 0.700l2.200 2.300-2.200 2.300" fill="none" stroke="#555" stroke-width="1.100"/></svg>
<span style="left:188px;top:176.35px;font-size:9px;line-height:11.7px;color:#111;transform:scaleX(0.885);transform-origin:0 50%;">zmienion...</span>
<svg style="left:255.5px;top:180px;" width="7" height="5" viewBox="0 0 7 5"><path d="M0.600 0.600l2.900 3 2.900-3" fill="none" stroke="#444" stroke-width="1.100"/></svg>
<div style="left:264px;top:174px;width:12.5px;height:16.5px;background:#fff;border:1px solid #e4e4e4;box-sizing:border-box;"></div>
<svg style="left:266.5px;top:178px;" width="8" height="8" viewBox="0 0 9 9"><path d="M7.500 4.500a3.200 3.200 0 1 1-1.200-2.500" fill="none" stroke="#555" stroke-width="1.100"/><path d="M5.500 0.300l2 1.800-2.300 1z" fill="#555"/></svg>
<div style="left:284px;top:174px;width:47px;height:16.5px;background:#fff;border:1px solid #e4e4e4;border-right:none;box-sizing:border-box;"></div>
<span style="left:290px;top:176.61px;font-size:8.6px;line-height:11.18px;color:#8c8c8c;transform:scaleX(0.752);transform-origin:0 50%;">Przeszukaj...</span>
<div style="left:55px;top:206px;width:25px;height:14.5px;background:#cdcdcd;"></div>
<svg style="left:72px;top:206.5px;" width="9" height="10" viewBox="0 0 9 10"><path d="M5 0.500l1.400 3 3.200 0.400-2.400 2.200 0.700 3.300-2.900-1.700-2.900 1.700 0.700-3.300-2.400-2.200 3.200-0.400z" fill="#2f8de0"/></svg>
<div style="left:74.5px;top:224px;width:6px;height:9px;background:#1e7fd6;"></div>
<svg style="left:73px;top:239px;" width="8" height="10" viewBox="0 0 8 10"><path d="M5 0v6M2 4l3 3.500 3-3.500M1 9h7" fill="none" stroke="#2b74c6" stroke-width="1.600"/></svg>
<div style="left:74.5px;top:255px;width:6px;height:10px;background:#fdfdfd;border:1px solid #8c8c8c;box-sizing:border-box;"></div>
<div style="left:74.5px;top:272.5px;width:6px;height:8px;background:#e8eef5;border:1px solid #8c8c8c;box-sizing:border-box;"></div>
<div style="left:76.5px;top:275.5px;width:2.5px;height:2.5px;background:#333;"></div>
<div style="left:75.5px;top:288px;width:5px;height:10px;background:#f6dc86;"></div>
<div style="left:75.5px;top:304px;width:5px;height:10px;background:#f6dc86;"></div>
<div style="left:75.5px;top:319.5px;width:5px;height:10px;background:#f6dc86;"></div>
<div style="left:75.5px;top:335.5px;width:5px;height:10px;background:#f6dc86;"></div>
<div style="left:70.5px;top:357px;width:10px;height:11px;background:#f8d88a;"></div>
<div style="left:74.5px;top:361.5px;width:5.5px;height:4px;background:#e0702a;"></div>
<svg style="left:68.5px;top:378px;" width="12" height="9" viewBox="0 0 12 9"><path d="M2.500 8.500a2.300 2.300 0 0 1 0.300-4.600a3.400 3.400 0 0 1 6.400-0.700a2.700 2.700 0 0 1 1.300 5.300z" fill="#1569b8"/></svg>
<div style="left:69px;top:398.5px;width:11px;height:7.5px;background:#2f9be8;"></div>
<div style="left:69px;top:406.5px;width:11px;height:1.3px;background:#2a6cb0;"></div>
<div style="left:74.5px;top:415px;width:6px;height:10px;background:#fdfdfd;border:1px solid #8c8c8c;box-sizing:border-box;"></div>
<div style="left:77px;top:436.5px;width:2.5px;height:2.5px;background:#2f7fd0;border-radius:50%;"></div>
<div style="left:74.5px;top:447.5px;width:6px;height:10px;background:#6fd0c8;"></div>
<div style="left:74.5px;top:463.5px;width:6px;height:8px;background:#e8eef5;border:1px solid #8c8c8c;box-sizing:border-box;"></div>
<div style="left:76.5px;top:466.5px;width:2.5px;height:2.5px;background:#333;"></div>
<svg style="left:73px;top:479px;" width="8" height="10" viewBox="0 0 8 10"><path d="M5 0v6M2 4l3 3.500 3-3.500M1 9h7" fill="none" stroke="#2b74c6" stroke-width="1.600"/></svg>
<div style="left:74.5px;top:496px;width:6px;height:9px;background:#1e7fd6;"></div>
<div style="left:75.5px;top:511px;width:5px;height:10px;background:#3a3a48;"></div>
<div style="left:76.5px;top:527.5px;width:3px;height:9px;background:#3a8ad8;"></div>
<div style="left:76px;top:543.5px;width:4px;height:10px;background:#a8a8a8;"></div>
<svg style="left:70px;top:564.5px;" width="10" height="11" viewBox="0 0 10 11"><rect x="0.600" y="2.600" width="8.800" height="7.800" fill="#f4f4f4" stroke="#666" stroke-width="1"/><path d="M2 2.500v-2h6v2M2.500 5h5M2.500 7.500h5" fill="none" stroke="#666" stroke-width="1"/></svg>
<div style="left:76.5px;top:581px;width:3.5px;height:11px;background:#f1d468;"></div>
<div style="left:80.5px;top:194.5px;width:9.5px;height:398px;background:#f0f0f0;"></div>
<div style="left:80.5px;top:207.5px;width:9.5px;height:323px;background:#cdcdcd;"></div>
<svg style="left:82px;top:197.5px;" width="7" height="5" viewBox="0 0 7 5"><path d="M0.700 4.200l2.800-2.900 2.800 2.900" fill="none" stroke="#333" stroke-width="1.300"/></svg>
<svg style="left:82px;top:584px;" width="7" height="5" viewBox="0 0 7 5"><path d="M0.700 0.800l2.800 2.900 2.800-2.900" fill="none" stroke="#333" stroke-width="1.300"/></svg>
<div style="left:111.5px;top:201px;width:110.5px;height:107.8px;background:#fdfdfd;box-shadow:1px 1px 1.500px rgba(0,0,0,0.45);"></div>
<div style="left:111.5px;top:332px;width:110.5px;height:107.8px;background:#fdfdfd;box-shadow:1px 1px 1.500px rgba(0,0,0,0.45);"></div>
<div style="left:111.5px;top:463.5px;width:110.5px;height:107.8px;background:#fdfdfd;box-shadow:1px 1px 1.500px rgba(0,0,0,0.45);"></div>
<svg style="left:140.5px;top:222px;overflow:visible;" width="46" height="48" viewBox="0 0 46 48"><polygon points="45.1,19.5 38.5,24.4 44.8,29.5 36.8,31.1 40.2,38.5 32.4,36.4 32.3,44.5 26.1,39.2 22.5,46.5 19.2,39.0 12.7,44.0 13.0,35.9 5.1,37.6 8.9,30.4 0.9,28.5 7.5,23.6 1.2,18.5 9.2,16.9 5.8,9.5 13.6,11.6 13.7,3.5 19.9,8.8 23.5,1.5 26.8,9.0 33.3,4.0 33.0,12.1 40.9,10.4 37.1,17.6" fill="#e2231f"/><path d="M3 27l9-1-5 7zM36 12l7-3-3 7z" fill="#f07a1e" opacity="0.850"/><g transform="rotate(13 23 24)"><path d="M9.500 19c-4.500-0.500-4.500 8.500 0 8.500M36.500 19c4.500-0.500 4.500 8.500 0 8.500" fill="none" stroke="#f9cfc8" stroke-width="1.700"/><rect x="9.500" y="17" width="13" height="14" fill="#f2c522"/><rect x="23.500" y="17" width="13" height="14" fill="#efbb1e"/><path d="M9 17.500c-0.500-3 3-4.500 5.500-3c2-2 5.500-1.500 7 0.500c1.500-2 5-2.500 7-0.500c2.500-1.500 6-0.500 8 1.500v2h-27.500z" fill="#fff6e6"/><path d="M23 18v13" stroke="#d89a18" stroke-width="0.900"/></g></svg>
<span style="left:125.6px;top:314.71px;font-size:8.6px;line-height:11.18px;color:#1c1c1c;transform:scaleX(0.841);transform-origin:0 50%;">_0000s_0000_Warstwa-1</span>
<svg style="left:141.2px;top:361.6px;" width="45.5" height="30" viewBox="0 0 45.5 30"><rect x="0" y="0" width="45.500" height="30" rx="1" fill="#25215f"/><path d="M4.500 4.500q14-1.500 29.500 0q1 10.500 0 21.500q-15 1.500-29.500 0q-1.200-11 0-21.500z" fill="#fdfdfd"/><rect x="37.500" y="4" width="5" height="9" fill="#d8d8e8" opacity="0.900"/><rect x="38" y="15.500" width="4" height="4" fill="#c8c8dc" opacity="0.850"/><rect x="38.500" y="22" width="3" height="3" fill="#8c8cb4"/></svg>
<span style="left:122.3px;top:444.71px;font-size:8.6px;line-height:11.18px;color:#1c1c1c;transform:scaleX(0.845);transform-origin:0 50%;">_0000s_0002_smieszne3-3</span>
<svg style="left:139.5px;top:485px;" width="48" height="45" viewBox="0 0 48 45"><path d="M9.500 3.500l10.500 11M43.500 0.500l-18.500 14" stroke="#4a4a66" stroke-width="1"/><path d="M1.500 20.500l32-6.500l8.500 1.500l1.500 5.500l2 1v9l-2.500 1.500l-1 7l-37.500 3.500z" fill="#25215f"/><path d="M5 23l23-4.500l1.500 17.500l-22.500 3z" fill="#fdfdfd"/><ellipse cx="20.500" cy="14.500" rx="4" ry="1.800" fill="#25215f"/></svg>
<span style="left:122.3px;top:574.71px;font-size:8.6px;line-height:11.18px;color:#1c1c1c;transform:scaleX(0.845);transform-origin:0 50%;">_0000s_0003_smieszne3-2</span>
<div style="left:321px;top:194.5px;width:9px;height:398px;background:#f0f0f0;"></div>
<div style="left:321px;top:207.5px;width:9px;height:284.5px;background:#cdcdcd;"></div>
<svg style="left:322px;top:197.5px;" width="7" height="5" viewBox="0 0 7 5"><path d="M0.700 4.200l2.800-2.900 2.800 2.900" fill="none" stroke="#333" stroke-width="1.300"/></svg>
<svg style="left:322px;top:584px;" width="7" height="5" viewBox="0 0 7 5"><path d="M0.700 0.800l2.800 2.900 2.800-2.900" fill="none" stroke="#333" stroke-width="1.300"/></svg>
<div style="left:234.5px;top:505.5px;width:13px;height:13px;background:#7fb58a;border-radius:50%;opacity:0.950;"></div>
<svg style="left:240px;top:511.5px;" width="10" height="14" viewBox="0 0 10 14"><path d="M1 0.800v10.400l2.500-2.300 1.800 4 1.700-0.800-1.800-3.800h3.300z" fill="#fff" stroke="#222" stroke-width="0.900"/></svg>
<span style="left:62.8px;top:594.91px;font-size:8.6px;line-height:11.18px;color:#3a3f50;transform:scaleX(0.885);transform-origin:0 50%;">Elementy: 4</span>
<svg style="left:302px;top:594.5px;" width="10" height="8" viewBox="0 0 10 8"><path d="M0 1.500h2M0 4h2M0 6.500h2M3.500 1.500h6M3.500 4h6M3.500 6.500h6" stroke="#8a8a8a" stroke-width="1"/></svg>
<svg style="left:315.5px;top:594px;" width="10" height="9" viewBox="0 0 10 9"><rect x="0.500" y="0.500" width="9" height="8" fill="#cfe4f7" stroke="#3c8fd6" stroke-width="1"/><rect x="2.500" y="2.500" width="5" height="3.500" fill="#6a8cb0"/></svg>
</div></body></html>
